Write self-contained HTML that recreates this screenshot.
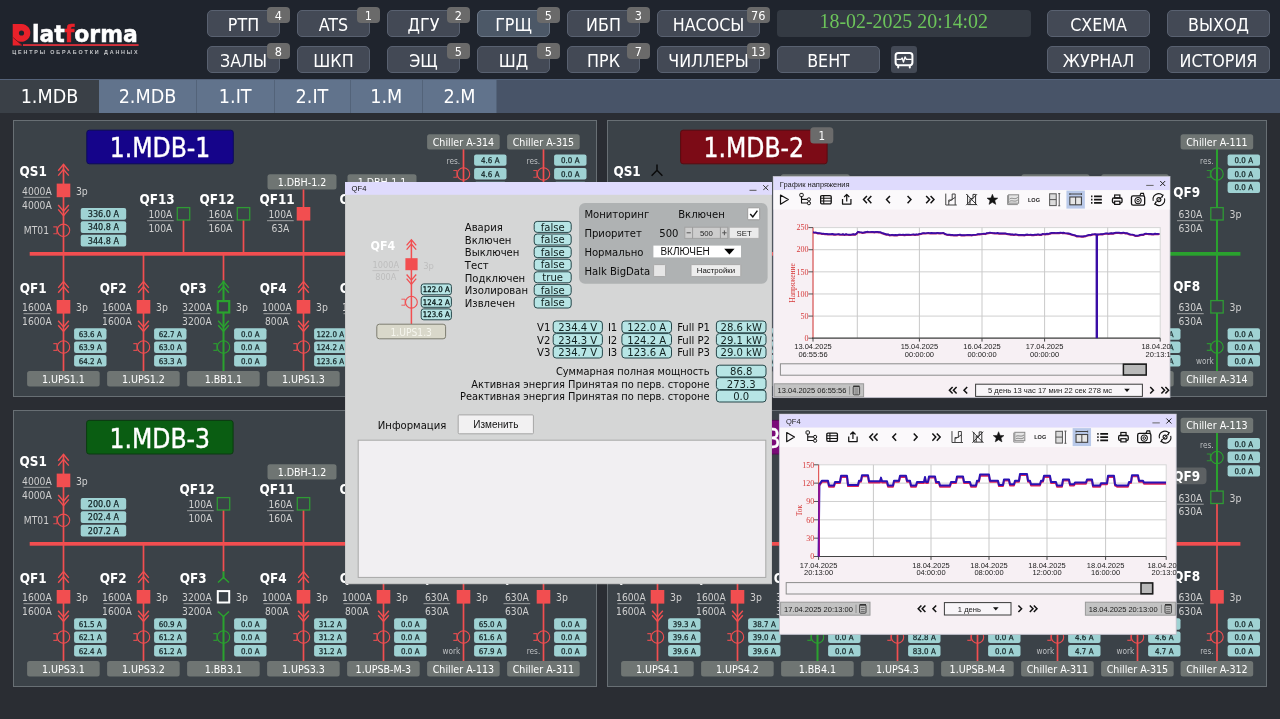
<!DOCTYPE html>
<html lang="ru"><head><meta charset="utf-8"><title>Platforma — 1.MDB</title>
<style>
*{box-sizing:border-box}
html,body{margin:0;padding:0}
body{width:1280px;height:719px;overflow:hidden;background:#2a2d33;font-family:'DejaVu Sans Condensed','Liberation Sans',sans-serif;position:relative}
.hdr{position:absolute;left:0;top:0;width:1280px;height:80px;background:#1f242d}
.btn{position:absolute;height:27px;border-radius:5px;background:#434955;border:1px solid #596170;color:#fff;font-size:17.7px;line-height:27px;padding-top:0.8px;text-align:center;white-space:nowrap}
.btn.act{background:#4c5867;border-color:#6a7686}
.badge{position:absolute;width:22.5px;height:16px;border-radius:4px;background:#6a6a6a;color:#fff;font-size:12.6px;line-height:18.6px;text-align:center}
.clock{position:absolute;left:777px;top:10px;width:253.5px;height:26.5px;border-radius:4px;background:#343a43;color:#6cc45a;font-family:'Liberation Serif',serif;font-size:19.9px;line-height:23.6px;text-align:center}
.icobtn{position:absolute;left:891px;top:46px;width:26px;height:27px;border-radius:3px;background:#434955}
.logo{position:absolute;left:0;top:0;width:150px;height:60px}
.logo svg{overflow:visible}
.tabs{position:absolute;left:0;top:79px;width:1280px;height:34px;background:#485468;border-top:1px solid #55637a}
.tab{position:absolute;top:0;height:33px;background:#61738c;color:#fff;font-size:19.6px;line-height:34px;text-align:center;border-right:1px solid #536379}
.tab.on{background:#3a4047;border-right:none}
svg text{font-family:'DejaVu Sans Condensed','Liberation Sans',sans-serif}
.main{position:absolute;left:0;top:0}
.hdr,.tabs,.main{will-change:transform}
</style></head>
<body>
<div class="hdr"><div class="logo"><svg width="150" height="50" viewBox="0 0 150 50">
<path d="M12.7 23.9H21.6A8.95 8.95 0 1 1 16.6 40.4L22.4 45.5H12.7Z" fill="#e9212a"/>
<path d="M13.2 37.6L22 45.3" stroke="#7d1218" stroke-width="0.9" fill="none"/>
<circle cx="21.5" cy="33" r="2.6" fill="#1f242d"/>
<rect x="23" y="44.1" width="115.6" height="1.9" fill="#d3303a"/>
<text x="32" y="42" style="font-family:'DejaVu Sans','Liberation Sans',sans-serif" font-weight="bold" font-size="23.4" fill="#fff" stroke="#fff" stroke-width="0.5" textLength="105.8" lengthAdjust="spacingAndGlyphs">lat<tspan fill="#e9212a" stroke="#e9212a">f</tspan>orma</text>
<text x="12.2" y="53.8" style="font-family:'Liberation Sans',sans-serif" font-weight="bold" font-size="5.4" fill="#c4c6c9" textLength="126.6" lengthAdjust="spacing" letter-spacing="1.2">ЦЕНТРЫ ОБРАБОТКИ ДАННЫХ</text>
</svg></div>
<div class="btn" style="left:207px;top:10px;width:73px">РТП</div><div class="badge" style="left:267px;top:6.5px">4</div>
<div class="btn" style="left:297px;top:10px;width:73px">ATS</div><div class="badge" style="left:357px;top:6.5px">1</div>
<div class="btn" style="left:387px;top:10px;width:73px">ДГУ</div><div class="badge" style="left:447px;top:6.5px">2</div>
<div class="btn act" style="left:477px;top:10px;width:73px">ГРЩ</div><div class="badge" style="left:537px;top:6.5px">5</div>
<div class="btn" style="left:567px;top:10px;width:73px">ИБП</div><div class="badge" style="left:627px;top:6.5px">3</div>
<div class="btn" style="left:657px;top:10px;width:103px">НАСОСЫ</div><div class="badge" style="left:747px;top:6.5px">76</div>
<div class="btn" style="left:207px;top:46px;width:73px">ЗАЛЫ</div><div class="badge" style="left:267px;top:42.5px">8</div>
<div class="btn" style="left:297px;top:46px;width:73px">ШКП</div>
<div class="btn" style="left:387px;top:46px;width:73px">ЭЩ</div><div class="badge" style="left:447px;top:42.5px">5</div>
<div class="btn" style="left:477px;top:46px;width:73px">ШД</div><div class="badge" style="left:537px;top:42.5px">5</div>
<div class="btn" style="left:567px;top:46px;width:73px">ПРК</div><div class="badge" style="left:627px;top:42.5px">7</div>
<div class="btn" style="left:657px;top:46px;width:103px">ЧИЛЛЕРЫ</div><div class="badge" style="left:747px;top:42.5px">13</div>
<div class="btn" style="left:777px;top:46px;width:103px">ВЕНТ</div>
<div class="btn" style="left:1047px;top:10px;width:103px">СХЕМА</div>
<div class="btn" style="left:1167px;top:10px;width:103px">ВЫХОД</div>
<div class="btn" style="left:1047px;top:46px;width:103px">ЖУРНАЛ</div>
<div class="btn" style="left:1167px;top:46px;width:103px">ИСТОРИЯ</div>
<div class="clock">18-02-2025 20:14:02</div>
<div class="icobtn"><svg width="26" height="27" viewBox="0 0 26 27"><rect x="4.6" y="7" width="16.8" height="12.2" rx="2.6" fill="none" stroke="#fff" stroke-width="2"/><path d="M7.2 20.4v1M18.8 20.4v1" stroke="#fff" stroke-width="2" stroke-linecap="round"/><path d="M5.4 13.4H10l1.2-1.4 1.3 4.2 1.5-5.4 1.3 2.6h5.4" fill="none" stroke="#fff" stroke-width="1.3" stroke-linejoin="round"/></svg></div></div>
<div class="tabs"><div class="tab on" style="left:0px;width:99px">1.MDB</div><div class="tab" style="left:99px;width:98px">2.MDB</div><div class="tab" style="left:197px;width:77.5px">1.IT</div><div class="tab" style="left:274.5px;width:76px">2.IT</div><div class="tab" style="left:350.5px;width:72.5px">1.M</div><div class="tab" style="left:423px;width:74px">2.M</div></div>
<svg class="main" width="1280" height="719" viewBox="0 0 1280 719">
<rect x="13.5" y="120.5" width="583" height="276" fill="#3b4248" stroke="#686f74" stroke-width="1"/>
<rect x="607.5" y="120.5" width="659" height="276" fill="#3b4248" stroke="#686f74" stroke-width="1"/>
<rect x="13.5" y="410.5" width="583" height="276" fill="#3b4248" stroke="#686f74" stroke-width="1"/>
<rect x="607.5" y="410.5" width="659" height="276" fill="#3b4248" stroke="#686f74" stroke-width="1"/>
<g><rect x="86.8" y="130.2" width="146.5" height="33.6" fill="#15048a" rx="2.5" stroke="#0c0a5a" stroke-width="1"/><text x="160" y="157.4" font-size="26.2" fill="#fff" text-anchor="middle" stroke="#fff" stroke-width="0.35">1.MDB-1</text><rect x="29.7" y="252" width="536.8" height="3.7" fill="#f24e50"/><line x1="63.5" y1="164.5" x2="63.5" y2="253" stroke="#f24e50" stroke-width="1.7"/><text x="19.6" y="176.1" font-size="13.4" fill="#fff" text-anchor="start" font-weight="bold">QS1</text><path d="M58.2 170.7L63.5 164.4L68.8 170.7M58.2 175.6L63.5 169.3L68.8 175.6" stroke="#f24e50" stroke-width="1.4" fill="none"/><rect x="56.7" y="183.6" width="13.6" height="13.6" fill="#f24e50"/><text x="36.9" y="194.8" font-size="10.2" fill="#cfcfcf" text-anchor="middle">4000A</text><line x1="23.5" y1="197.3" x2="50.2" y2="197.3" stroke="#a9acae" stroke-width="0.9"/><text x="36.9" y="208.5" font-size="10.2" fill="#cfcfcf" text-anchor="middle">4000A</text><text x="75.9" y="195" font-size="10.4" fill="#cfcfcf" text-anchor="start">3p</text><path d="M58.2 205L63.5 211.2L68.8 205M58.2 209.4L63.5 215.6L68.8 209.4" stroke="#f24e50" stroke-width="1.4" fill="none"/><circle cx="63.5" cy="230.3" r="6.2" fill="none" stroke="#f24e50" stroke-width="1.1"/><path d="M53.3 226.9H56.9V233.7H53.3" stroke="#f24e50" stroke-width="1.1" fill="none" opacity="0.85"/><text x="23.8" y="234.2" font-size="10.2" fill="#cfcfcf" text-anchor="start">MT01</text><rect x="80.7" y="208" width="45.5" height="11.7" fill="#9fd2d3" rx="2"/><text x="103.45" y="217.13" font-size="9" fill="#142426" text-anchor="middle" stroke="#142426" stroke-width="0.25">336.0 A</text><rect x="80.7" y="221.35" width="45.5" height="11.7" fill="#9fd2d3" rx="2"/><text x="103.45" y="230.48" font-size="9" fill="#142426" text-anchor="middle" stroke="#142426" stroke-width="0.25">340.8 A</text><rect x="80.7" y="234.7" width="45.5" height="11.7" fill="#9fd2d3" rx="2"/><text x="103.45" y="243.83" font-size="9" fill="#142426" text-anchor="middle" stroke="#142426" stroke-width="0.25">344.8 A</text><line x1="183.5" y1="220" x2="183.5" y2="253" stroke="#f24e50" stroke-width="1.7"/><text x="139.5" y="203.6" font-size="13.4" fill="#fff" text-anchor="start" font-weight="bold">QF13</text><rect x="177.3" y="207.6" width="12.4" height="12.4" fill="#3b4248" stroke="#2f9a35" stroke-width="1.3"/><text x="160.4" y="218.2" font-size="10.2" fill="#cfcfcf" text-anchor="middle">100A</text><line x1="147" y1="220.7" x2="173.7" y2="220.7" stroke="#a9acae" stroke-width="0.9"/><text x="160.4" y="231.9" font-size="10.2" fill="#cfcfcf" text-anchor="middle">100A</text><line x1="243.5" y1="220" x2="243.5" y2="253" stroke="#f24e50" stroke-width="1.7"/><text x="199.5" y="203.6" font-size="13.4" fill="#fff" text-anchor="start" font-weight="bold">QF12</text><rect x="237.3" y="207.6" width="12.4" height="12.4" fill="#3b4248" stroke="#2f9a35" stroke-width="1.3"/><text x="220.4" y="218.2" font-size="10.2" fill="#cfcfcf" text-anchor="middle">160A</text><line x1="207" y1="220.7" x2="233.7" y2="220.7" stroke="#a9acae" stroke-width="0.9"/><text x="220.4" y="231.9" font-size="10.2" fill="#cfcfcf" text-anchor="middle">160A</text><line x1="303.5" y1="220" x2="303.5" y2="253" stroke="#f24e50" stroke-width="1.7"/><rect x="267.5" y="174.2" width="69" height="15.3" fill="#6f7573" rx="2.5"/><text x="302" y="185.5" font-size="10.6" fill="#fff" text-anchor="middle">1.DBH-1.2</text><line x1="303.5" y1="189.5" x2="303.5" y2="208" stroke="#f24e50" stroke-width="1.7"/><text x="259.5" y="203.6" font-size="13.4" fill="#fff" text-anchor="start" font-weight="bold">QF11</text><rect x="296.7" y="207" width="13.6" height="13.6" fill="#f24e50"/><text x="280.4" y="218.2" font-size="10.2" fill="#cfcfcf" text-anchor="middle">100A</text><line x1="267" y1="220.7" x2="293.7" y2="220.7" stroke="#a9acae" stroke-width="0.9"/><text x="280.4" y="231.9" font-size="10.2" fill="#cfcfcf" text-anchor="middle">63A</text><line x1="383.5" y1="220" x2="383.5" y2="253" stroke="#f24e50" stroke-width="1.7"/><rect x="347.5" y="174.2" width="69" height="15.3" fill="#6f7573" rx="2.5"/><text x="382" y="185.5" font-size="10.6" fill="#fff" text-anchor="middle">1.DBH-1.1</text><line x1="383.5" y1="189.5" x2="383.5" y2="208" stroke="#f24e50" stroke-width="1.7"/><text x="339.5" y="203.6" font-size="13.4" fill="#fff" text-anchor="start" font-weight="bold">QF10</text><rect x="376.7" y="207" width="13.6" height="13.6" fill="#f24e50"/><text x="360.4" y="218.2" font-size="10.2" fill="#cfcfcf" text-anchor="middle">100A</text><line x1="347" y1="220.7" x2="373.7" y2="220.7" stroke="#a9acae" stroke-width="0.9"/><text x="360.4" y="231.9" font-size="10.2" fill="#cfcfcf" text-anchor="middle">63A</text><line x1="463.5" y1="149" x2="463.5" y2="208" stroke="#f24e50" stroke-width="1.7"/><line x1="463.5" y1="220" x2="463.5" y2="253" stroke="#f24e50" stroke-width="1.7"/><rect x="427.1" y="134.2" width="72.6" height="15.3" fill="#6f7573" rx="2.5"/><text x="463.4" y="145.5" font-size="10.6" fill="#fff" text-anchor="middle">Chiller A-314</text><text x="460.1" y="164.3" font-size="8.2" fill="#bcbfc1" text-anchor="end">res.</text><circle cx="463.5" cy="173.9" r="6.2" fill="none" stroke="#f24e50" stroke-width="1.1"/><path d="M453.3 170.5H456.9V177.3H453.3" stroke="#f24e50" stroke-width="1.1" fill="none" opacity="0.85"/><rect x="474.1" y="154.5" width="32.4" height="11.3" fill="#9fd2d3" rx="2"/><text x="490.3" y="163.03" font-size="7.9" fill="#142426" text-anchor="middle" stroke="#142426" stroke-width="0.25">4.6 A</text><rect x="474.1" y="168.1" width="32.4" height="11.3" fill="#9fd2d3" rx="2"/><text x="490.3" y="176.63" font-size="7.9" fill="#142426" text-anchor="middle" stroke="#142426" stroke-width="0.25">4.6 A</text><rect x="474.1" y="181.7" width="32.4" height="11.3" fill="#9fd2d3" rx="2"/><text x="490.3" y="190.23" font-size="7.9" fill="#142426" text-anchor="middle" stroke="#142426" stroke-width="0.25">4.7 A</text><text x="419.7" y="197.4" font-size="13.4" fill="#fff" text-anchor="start" font-weight="bold">QF9</text><rect x="456.7" y="207" width="13.6" height="13.6" fill="#f24e50"/><text x="436.9" y="218.2" font-size="10.2" fill="#cfcfcf" text-anchor="middle">630A</text><line x1="423.5" y1="220.7" x2="450.2" y2="220.7" stroke="#a9acae" stroke-width="0.9"/><text x="436.9" y="231.9" font-size="10.2" fill="#cfcfcf" text-anchor="middle">630A</text><text x="476.1" y="218.4" font-size="10.4" fill="#cfcfcf" text-anchor="start">3p</text><line x1="543.5" y1="149" x2="543.5" y2="208" stroke="#f24e50" stroke-width="1.7"/><line x1="543.5" y1="220" x2="543.5" y2="253" stroke="#f24e50" stroke-width="1.7"/><rect x="507.1" y="134.2" width="72.6" height="15.3" fill="#6f7573" rx="2.5"/><text x="543.4" y="145.5" font-size="10.6" fill="#fff" text-anchor="middle">Chiller A-315</text><text x="540.1" y="164.3" font-size="8.2" fill="#bcbfc1" text-anchor="end">res.</text><circle cx="543.5" cy="173.9" r="6.2" fill="none" stroke="#f24e50" stroke-width="1.1"/><path d="M533.3 170.5H536.9V177.3H533.3" stroke="#f24e50" stroke-width="1.1" fill="none" opacity="0.85"/><rect x="554.1" y="154.5" width="32.4" height="11.3" fill="#9fd2d3" rx="2"/><text x="570.3" y="163.03" font-size="7.9" fill="#142426" text-anchor="middle" stroke="#142426" stroke-width="0.25">0.0 A</text><rect x="554.1" y="168.1" width="32.4" height="11.3" fill="#9fd2d3" rx="2"/><text x="570.3" y="176.63" font-size="7.9" fill="#142426" text-anchor="middle" stroke="#142426" stroke-width="0.25">0.0 A</text><rect x="554.1" y="181.7" width="32.4" height="11.3" fill="#9fd2d3" rx="2"/><text x="570.3" y="190.23" font-size="7.9" fill="#142426" text-anchor="middle" stroke="#142426" stroke-width="0.25">0.0 A</text><text x="499.7" y="197.4" font-size="13.4" fill="#fff" text-anchor="start" font-weight="bold">QF8</text><rect x="536.7" y="207" width="13.6" height="13.6" fill="#f24e50"/><text x="516.9" y="218.2" font-size="10.2" fill="#cfcfcf" text-anchor="middle">630A</text><line x1="503.5" y1="220.7" x2="530.2" y2="220.7" stroke="#a9acae" stroke-width="0.9"/><text x="516.9" y="231.9" font-size="10.2" fill="#cfcfcf" text-anchor="middle">630A</text><text x="556.1" y="218.4" font-size="10.4" fill="#cfcfcf" text-anchor="start">3p</text><line x1="63.5" y1="255" x2="63.5" y2="371" stroke="#f24e50" stroke-width="1.7"/><text x="19.7" y="293" font-size="13.4" fill="#fff" text-anchor="start" font-weight="bold">QF1</text><path d="M58.2 287.9L63.5 281.6L68.8 287.9M58.2 292.8L63.5 286.5L68.8 292.8" stroke="#f24e50" stroke-width="1.4" fill="none"/><path d="M58.2 320.8L63.5 327L68.8 320.8M58.2 325.2L63.5 331.4L68.8 325.2" stroke="#f24e50" stroke-width="1.4" fill="none"/><rect x="56.7" y="300" width="13.6" height="13.6" fill="#f24e50"/><text x="36.9" y="311.2" font-size="10.2" fill="#cfcfcf" text-anchor="middle">1600A</text><line x1="23.5" y1="313.7" x2="50.2" y2="313.7" stroke="#a9acae" stroke-width="0.9"/><text x="36.9" y="324.9" font-size="10.2" fill="#cfcfcf" text-anchor="middle">1600A</text><text x="76.1" y="311.4" font-size="10.4" fill="#cfcfcf" text-anchor="start">3p</text><circle cx="63.5" cy="347" r="6.2" fill="none" stroke="#f24e50" stroke-width="1.1"/><path d="M53.3 343.6H56.9V350.4H53.3" stroke="#f24e50" stroke-width="1.1" fill="none" opacity="0.85"/><rect x="74.1" y="328.2" width="32.4" height="11.5" fill="#9fd2d3" rx="2"/><text x="90.3" y="336.83" font-size="7.9" fill="#142426" text-anchor="middle" stroke="#142426" stroke-width="0.25">63.6 A</text><rect x="74.1" y="341.55" width="32.4" height="11.5" fill="#9fd2d3" rx="2"/><text x="90.3" y="350.18" font-size="7.9" fill="#142426" text-anchor="middle" stroke="#142426" stroke-width="0.25">63.9 A</text><rect x="74.1" y="354.9" width="32.4" height="11.5" fill="#9fd2d3" rx="2"/><text x="90.3" y="363.53" font-size="7.9" fill="#142426" text-anchor="middle" stroke="#142426" stroke-width="0.25">64.2 A</text><rect x="27.1" y="371" width="72.6" height="15.5" fill="#6f7573" rx="2.5"/><text x="63.4" y="382.5" font-size="10.6" fill="#fff" text-anchor="middle">1.UPS1.1</text><line x1="143.5" y1="255" x2="143.5" y2="371" stroke="#f24e50" stroke-width="1.7"/><text x="99.7" y="293" font-size="13.4" fill="#fff" text-anchor="start" font-weight="bold">QF2</text><path d="M138.2 287.9L143.5 281.6L148.8 287.9M138.2 292.8L143.5 286.5L148.8 292.8" stroke="#f24e50" stroke-width="1.4" fill="none"/><path d="M138.2 320.8L143.5 327L148.8 320.8M138.2 325.2L143.5 331.4L148.8 325.2" stroke="#f24e50" stroke-width="1.4" fill="none"/><rect x="136.7" y="300" width="13.6" height="13.6" fill="#f24e50"/><text x="116.9" y="311.2" font-size="10.2" fill="#cfcfcf" text-anchor="middle">1600A</text><line x1="103.5" y1="313.7" x2="130.2" y2="313.7" stroke="#a9acae" stroke-width="0.9"/><text x="116.9" y="324.9" font-size="10.2" fill="#cfcfcf" text-anchor="middle">1600A</text><text x="156.1" y="311.4" font-size="10.4" fill="#cfcfcf" text-anchor="start">3p</text><circle cx="143.5" cy="347" r="6.2" fill="none" stroke="#f24e50" stroke-width="1.1"/><path d="M133.3 343.6H136.9V350.4H133.3" stroke="#f24e50" stroke-width="1.1" fill="none" opacity="0.85"/><rect x="154.1" y="328.2" width="32.4" height="11.5" fill="#9fd2d3" rx="2"/><text x="170.3" y="336.83" font-size="7.9" fill="#142426" text-anchor="middle" stroke="#142426" stroke-width="0.25">62.7 A</text><rect x="154.1" y="341.55" width="32.4" height="11.5" fill="#9fd2d3" rx="2"/><text x="170.3" y="350.18" font-size="7.9" fill="#142426" text-anchor="middle" stroke="#142426" stroke-width="0.25">63.0 A</text><rect x="154.1" y="354.9" width="32.4" height="11.5" fill="#9fd2d3" rx="2"/><text x="170.3" y="363.53" font-size="7.9" fill="#142426" text-anchor="middle" stroke="#142426" stroke-width="0.25">63.3 A</text><rect x="107.1" y="371" width="72.6" height="15.5" fill="#6f7573" rx="2.5"/><text x="143.4" y="382.5" font-size="10.6" fill="#fff" text-anchor="middle">1.UPS1.2</text><line x1="223.5" y1="255" x2="223.5" y2="280.5" stroke="#f24e50" stroke-width="1.7"/><line x1="223.5" y1="280.5" x2="223.5" y2="371" stroke="#2aa22e" stroke-width="2"/><text x="179.7" y="293" font-size="13.4" fill="#fff" text-anchor="start" font-weight="bold">QF3</text><path d="M218.2 287.9L223.5 281.6L228.8 287.9M218.2 292.8L223.5 286.5L228.8 292.8" stroke="#2aa22e" stroke-width="1.4" fill="none"/><path d="M218.2 320.8L223.5 327L228.8 320.8M218.2 325.2L223.5 331.4L228.8 325.2" stroke="#2aa22e" stroke-width="1.4" fill="none"/><rect x="217.8" y="301.1" width="11.4" height="11.4" fill="#3b4248" stroke="#2aa22e" stroke-width="2.2"/><text x="196.9" y="311.2" font-size="10.2" fill="#cfcfcf" text-anchor="middle">3200A</text><line x1="183.5" y1="313.7" x2="210.2" y2="313.7" stroke="#a9acae" stroke-width="0.9"/><text x="196.9" y="324.9" font-size="10.2" fill="#cfcfcf" text-anchor="middle">3200A</text><text x="236.1" y="311.4" font-size="10.4" fill="#cfcfcf" text-anchor="start">3p</text><circle cx="223.5" cy="347" r="6.2" fill="none" stroke="#2aa22e" stroke-width="1.1"/><path d="M213.3 343.6H216.9V350.4H213.3" stroke="#2aa22e" stroke-width="1.1" fill="none" opacity="0.85"/><rect x="234.1" y="328.2" width="32.4" height="11.5" fill="#9fd2d3" rx="2"/><text x="250.3" y="336.83" font-size="7.9" fill="#142426" text-anchor="middle" stroke="#142426" stroke-width="0.25">0.0 A</text><rect x="234.1" y="341.55" width="32.4" height="11.5" fill="#9fd2d3" rx="2"/><text x="250.3" y="350.18" font-size="7.9" fill="#142426" text-anchor="middle" stroke="#142426" stroke-width="0.25">0.0 A</text><rect x="234.1" y="354.9" width="32.4" height="11.5" fill="#9fd2d3" rx="2"/><text x="250.3" y="363.53" font-size="7.9" fill="#142426" text-anchor="middle" stroke="#142426" stroke-width="0.25">0.0 A</text><rect x="187.1" y="371" width="72.6" height="15.5" fill="#6f7573" rx="2.5"/><text x="223.4" y="382.5" font-size="10.6" fill="#fff" text-anchor="middle">1.BB1.1</text><line x1="303.5" y1="255" x2="303.5" y2="371" stroke="#f24e50" stroke-width="1.7"/><text x="259.7" y="293" font-size="13.4" fill="#fff" text-anchor="start" font-weight="bold">QF4</text><path d="M298.2 287.9L303.5 281.6L308.8 287.9M298.2 292.8L303.5 286.5L308.8 292.8" stroke="#f24e50" stroke-width="1.4" fill="none"/><path d="M298.2 320.8L303.5 327L308.8 320.8M298.2 325.2L303.5 331.4L308.8 325.2" stroke="#f24e50" stroke-width="1.4" fill="none"/><rect x="296.7" y="300" width="13.6" height="13.6" fill="#f24e50"/><text x="276.9" y="311.2" font-size="10.2" fill="#cfcfcf" text-anchor="middle">1000A</text><line x1="263.5" y1="313.7" x2="290.2" y2="313.7" stroke="#a9acae" stroke-width="0.9"/><text x="276.9" y="324.9" font-size="10.2" fill="#cfcfcf" text-anchor="middle">800A</text><text x="316.1" y="311.4" font-size="10.4" fill="#cfcfcf" text-anchor="start">3p</text><circle cx="303.5" cy="347" r="6.2" fill="none" stroke="#f24e50" stroke-width="1.1"/><path d="M293.3 343.6H296.9V350.4H293.3" stroke="#f24e50" stroke-width="1.1" fill="none" opacity="0.85"/><rect x="314.1" y="328.2" width="32.4" height="11.5" fill="#9fd2d3" rx="2"/><text x="330.3" y="336.83" font-size="7.9" fill="#142426" text-anchor="middle" stroke="#142426" stroke-width="0.25">122.0 A</text><rect x="314.1" y="341.55" width="32.4" height="11.5" fill="#9fd2d3" rx="2"/><text x="330.3" y="350.18" font-size="7.9" fill="#142426" text-anchor="middle" stroke="#142426" stroke-width="0.25">124.2 A</text><rect x="314.1" y="354.9" width="32.4" height="11.5" fill="#9fd2d3" rx="2"/><text x="330.3" y="363.53" font-size="7.9" fill="#142426" text-anchor="middle" stroke="#142426" stroke-width="0.25">123.6 A</text><rect x="267.1" y="371" width="72.6" height="15.5" fill="#6f7573" rx="2.5"/><text x="303.4" y="382.5" font-size="10.6" fill="#fff" text-anchor="middle">1.UPS1.3</text><line x1="383.5" y1="255" x2="383.5" y2="371" stroke="#f24e50" stroke-width="1.7"/><text x="339.7" y="293" font-size="13.4" fill="#fff" text-anchor="start" font-weight="bold">QF5</text><path d="M378.2 287.9L383.5 281.6L388.8 287.9M378.2 292.8L383.5 286.5L388.8 292.8" stroke="#f24e50" stroke-width="1.4" fill="none"/><path d="M378.2 320.8L383.5 327L388.8 320.8M378.2 325.2L383.5 331.4L388.8 325.2" stroke="#f24e50" stroke-width="1.4" fill="none"/><rect x="376.7" y="300" width="13.6" height="13.6" fill="#f24e50"/><text x="356.9" y="311.2" font-size="10.2" fill="#cfcfcf" text-anchor="middle">1000A</text><line x1="343.5" y1="313.7" x2="370.2" y2="313.7" stroke="#a9acae" stroke-width="0.9"/><text x="356.9" y="324.9" font-size="10.2" fill="#cfcfcf" text-anchor="middle">800A</text><text x="396.1" y="311.4" font-size="10.4" fill="#cfcfcf" text-anchor="start">3p</text><circle cx="383.5" cy="347" r="6.2" fill="none" stroke="#f24e50" stroke-width="1.1"/><path d="M373.3 343.6H376.9V350.4H373.3" stroke="#f24e50" stroke-width="1.1" fill="none" opacity="0.85"/><rect x="394.1" y="328.2" width="32.4" height="11.5" fill="#9fd2d3" rx="2"/><text x="410.3" y="336.83" font-size="7.9" fill="#142426" text-anchor="middle" stroke="#142426" stroke-width="0.25">0.0 A</text><rect x="394.1" y="341.55" width="32.4" height="11.5" fill="#9fd2d3" rx="2"/><text x="410.3" y="350.18" font-size="7.9" fill="#142426" text-anchor="middle" stroke="#142426" stroke-width="0.25">0.0 A</text><rect x="394.1" y="354.9" width="32.4" height="11.5" fill="#9fd2d3" rx="2"/><text x="410.3" y="363.53" font-size="7.9" fill="#142426" text-anchor="middle" stroke="#142426" stroke-width="0.25">0.0 A</text><rect x="347.1" y="371" width="72.6" height="15.5" fill="#6f7573" rx="2.5"/><text x="383.4" y="382.5" font-size="10.6" fill="#fff" text-anchor="middle">1.UPSB-M-1</text><line x1="463.5" y1="255" x2="463.5" y2="371" stroke="#f24e50" stroke-width="1.7"/><text x="419.7" y="293" font-size="13.4" fill="#fff" text-anchor="start" font-weight="bold">QF6</text><rect x="456.7" y="300" width="13.6" height="13.6" fill="#f24e50"/><text x="436.9" y="311.2" font-size="10.2" fill="#cfcfcf" text-anchor="middle">630A</text><line x1="423.5" y1="313.7" x2="450.2" y2="313.7" stroke="#a9acae" stroke-width="0.9"/><text x="436.9" y="324.9" font-size="10.2" fill="#cfcfcf" text-anchor="middle">630A</text><text x="476.1" y="311.4" font-size="10.4" fill="#cfcfcf" text-anchor="start">3p</text><circle cx="463.5" cy="347" r="6.2" fill="none" stroke="#f24e50" stroke-width="1.1"/><path d="M453.3 343.6H456.9V350.4H453.3" stroke="#f24e50" stroke-width="1.1" fill="none" opacity="0.85"/><rect x="474.1" y="328.2" width="32.4" height="11.5" fill="#9fd2d3" rx="2"/><text x="490.3" y="336.83" font-size="7.9" fill="#142426" text-anchor="middle" stroke="#142426" stroke-width="0.25">4.6 A</text><rect x="474.1" y="341.55" width="32.4" height="11.5" fill="#9fd2d3" rx="2"/><text x="490.3" y="350.18" font-size="7.9" fill="#142426" text-anchor="middle" stroke="#142426" stroke-width="0.25">4.6 A</text><rect x="474.1" y="354.9" width="32.4" height="11.5" fill="#9fd2d3" rx="2"/><text x="490.3" y="363.53" font-size="7.9" fill="#142426" text-anchor="middle" stroke="#142426" stroke-width="0.25">4.7 A</text><text x="460.3" y="364" font-size="8.2" fill="#bcbfc1" text-anchor="end">work</text><rect x="427.1" y="371" width="72.6" height="15.5" fill="#6f7573" rx="2.5"/><text x="463.4" y="382.5" font-size="10.6" fill="#fff" text-anchor="middle">Chiller A-111</text><line x1="543.5" y1="255" x2="543.5" y2="371" stroke="#f24e50" stroke-width="1.7"/><text x="499.7" y="293" font-size="13.4" fill="#fff" text-anchor="start" font-weight="bold">QF7</text><rect x="536.7" y="300" width="13.6" height="13.6" fill="#f24e50"/><text x="516.9" y="311.2" font-size="10.2" fill="#cfcfcf" text-anchor="middle">630A</text><line x1="503.5" y1="313.7" x2="530.2" y2="313.7" stroke="#a9acae" stroke-width="0.9"/><text x="516.9" y="324.9" font-size="10.2" fill="#cfcfcf" text-anchor="middle">630A</text><text x="556.1" y="311.4" font-size="10.4" fill="#cfcfcf" text-anchor="start">3p</text><circle cx="543.5" cy="347" r="6.2" fill="none" stroke="#f24e50" stroke-width="1.1"/><path d="M533.3 343.6H536.9V350.4H533.3" stroke="#f24e50" stroke-width="1.1" fill="none" opacity="0.85"/><rect x="554.1" y="328.2" width="32.4" height="11.5" fill="#9fd2d3" rx="2"/><text x="570.3" y="336.83" font-size="7.9" fill="#142426" text-anchor="middle" stroke="#142426" stroke-width="0.25">0.0 A</text><rect x="554.1" y="341.55" width="32.4" height="11.5" fill="#9fd2d3" rx="2"/><text x="570.3" y="350.18" font-size="7.9" fill="#142426" text-anchor="middle" stroke="#142426" stroke-width="0.25">0.0 A</text><rect x="554.1" y="354.9" width="32.4" height="11.5" fill="#9fd2d3" rx="2"/><text x="570.3" y="363.53" font-size="7.9" fill="#142426" text-anchor="middle" stroke="#142426" stroke-width="0.25">0.0 A</text><text x="540.3" y="364" font-size="8.2" fill="#bcbfc1" text-anchor="end">res.</text><rect x="507.1" y="371" width="72.6" height="15.5" fill="#6f7573" rx="2.5"/><text x="543.4" y="382.5" font-size="10.6" fill="#fff" text-anchor="middle">Chiller A-312</text></g>
<g><rect x="86.6" y="420.4" width="146.5" height="33.6" fill="#0a5d12" rx="2.5" stroke="#0b3b10" stroke-width="1"/><text x="159.8" y="447.6" font-size="26.2" fill="#fff" text-anchor="middle" stroke="#fff" stroke-width="0.35">1.MDB-3</text><rect x="29.7" y="542" width="536.8" height="3.7" fill="#f24e50"/><line x1="63.5" y1="454.5" x2="63.5" y2="543" stroke="#f24e50" stroke-width="1.7"/><text x="19.6" y="466.1" font-size="13.4" fill="#fff" text-anchor="start" font-weight="bold">QS1</text><path d="M58.2 460.7L63.5 454.4L68.8 460.7M58.2 465.6L63.5 459.3L68.8 465.6" stroke="#f24e50" stroke-width="1.4" fill="none"/><rect x="56.7" y="473.6" width="13.6" height="13.6" fill="#f24e50"/><text x="36.9" y="484.8" font-size="10.2" fill="#cfcfcf" text-anchor="middle">4000A</text><line x1="23.5" y1="487.3" x2="50.2" y2="487.3" stroke="#a9acae" stroke-width="0.9"/><text x="36.9" y="498.5" font-size="10.2" fill="#cfcfcf" text-anchor="middle">4000A</text><text x="75.9" y="485" font-size="10.4" fill="#cfcfcf" text-anchor="start">3p</text><path d="M58.2 495L63.5 501.2L68.8 495M58.2 499.4L63.5 505.6L68.8 499.4" stroke="#f24e50" stroke-width="1.4" fill="none"/><circle cx="63.5" cy="520.3" r="6.2" fill="none" stroke="#f24e50" stroke-width="1.1"/><path d="M53.3 516.9H56.9V523.7H53.3" stroke="#f24e50" stroke-width="1.1" fill="none" opacity="0.85"/><text x="23.8" y="524.2" font-size="10.2" fill="#cfcfcf" text-anchor="start">MT01</text><rect x="80.7" y="498" width="45.5" height="11.7" fill="#9fd2d3" rx="2"/><text x="103.45" y="507.14" font-size="9" fill="#142426" text-anchor="middle" stroke="#142426" stroke-width="0.25">200.0 A</text><rect x="80.7" y="511.35" width="45.5" height="11.7" fill="#9fd2d3" rx="2"/><text x="103.45" y="520.49" font-size="9" fill="#142426" text-anchor="middle" stroke="#142426" stroke-width="0.25">202.4 A</text><rect x="80.7" y="524.7" width="45.5" height="11.7" fill="#9fd2d3" rx="2"/><text x="103.45" y="533.84" font-size="9" fill="#142426" text-anchor="middle" stroke="#142426" stroke-width="0.25">207.2 A</text><line x1="223.5" y1="510" x2="223.5" y2="543" stroke="#f24e50" stroke-width="1.7"/><text x="179.5" y="493.6" font-size="13.4" fill="#fff" text-anchor="start" font-weight="bold">QF12</text><rect x="217.3" y="497.6" width="12.4" height="12.4" fill="#3b4248" stroke="#2f9a35" stroke-width="1.3"/><text x="200.4" y="508.2" font-size="10.2" fill="#cfcfcf" text-anchor="middle">100A</text><line x1="187" y1="510.7" x2="213.7" y2="510.7" stroke="#a9acae" stroke-width="0.9"/><text x="200.4" y="521.9" font-size="10.2" fill="#cfcfcf" text-anchor="middle">100A</text><line x1="303.5" y1="510" x2="303.5" y2="543" stroke="#f24e50" stroke-width="1.7"/><rect x="267.5" y="464.2" width="69" height="15.3" fill="#6f7573" rx="2.5"/><text x="302" y="475.5" font-size="10.6" fill="#fff" text-anchor="middle">1.DBH-1.2</text><text x="259.5" y="493.6" font-size="13.4" fill="#fff" text-anchor="start" font-weight="bold">QF11</text><rect x="297.3" y="497.6" width="12.4" height="12.4" fill="#3b4248" stroke="#2f9a35" stroke-width="1.3"/><text x="280.4" y="508.2" font-size="10.2" fill="#cfcfcf" text-anchor="middle">160A</text><line x1="267" y1="510.7" x2="293.7" y2="510.7" stroke="#a9acae" stroke-width="0.9"/><text x="280.4" y="521.9" font-size="10.2" fill="#cfcfcf" text-anchor="middle">160A</text><line x1="383.5" y1="510" x2="383.5" y2="543" stroke="#f24e50" stroke-width="1.7"/><rect x="347.5" y="464.2" width="69" height="15.3" fill="#6f7573" rx="2.5"/><text x="382" y="475.5" font-size="10.6" fill="#fff" text-anchor="middle">1.DBH-1.1</text><line x1="383.5" y1="479.5" x2="383.5" y2="498" stroke="#f24e50" stroke-width="1.7"/><text x="339.5" y="493.6" font-size="13.4" fill="#fff" text-anchor="start" font-weight="bold">QF10</text><rect x="376.7" y="497" width="13.6" height="13.6" fill="#f24e50"/><text x="360.4" y="508.2" font-size="10.2" fill="#cfcfcf" text-anchor="middle">100A</text><line x1="347" y1="510.7" x2="373.7" y2="510.7" stroke="#a9acae" stroke-width="0.9"/><text x="360.4" y="521.9" font-size="10.2" fill="#cfcfcf" text-anchor="middle">63A</text><line x1="463.5" y1="439" x2="463.5" y2="498" stroke="#f24e50" stroke-width="1.7"/><line x1="463.5" y1="510" x2="463.5" y2="543" stroke="#f24e50" stroke-width="1.7"/><rect x="427.1" y="424.2" width="72.6" height="15.3" fill="#6f7573" rx="2.5"/><text x="463.4" y="435.5" font-size="10.6" fill="#fff" text-anchor="middle">Chiller A-112</text><text x="460.1" y="454.3" font-size="8.2" fill="#bcbfc1" text-anchor="end">res.</text><circle cx="463.5" cy="463.9" r="6.2" fill="none" stroke="#f24e50" stroke-width="1.1"/><path d="M453.3 460.5H456.9V467.3H453.3" stroke="#f24e50" stroke-width="1.1" fill="none" opacity="0.85"/><rect x="474.1" y="444.5" width="32.4" height="11.3" fill="#9fd2d3" rx="2"/><text x="490.3" y="453.03" font-size="7.9" fill="#142426" text-anchor="middle" stroke="#142426" stroke-width="0.25">0.0 A</text><rect x="474.1" y="458.1" width="32.4" height="11.3" fill="#9fd2d3" rx="2"/><text x="490.3" y="466.63" font-size="7.9" fill="#142426" text-anchor="middle" stroke="#142426" stroke-width="0.25">0.0 A</text><rect x="474.1" y="471.7" width="32.4" height="11.3" fill="#9fd2d3" rx="2"/><text x="490.3" y="480.23" font-size="7.9" fill="#142426" text-anchor="middle" stroke="#142426" stroke-width="0.25">0.0 A</text><text x="419.7" y="487.4" font-size="13.4" fill="#fff" text-anchor="start" font-weight="bold">QF9</text><rect x="456.7" y="497" width="13.6" height="13.6" fill="#f24e50"/><text x="436.9" y="508.2" font-size="10.2" fill="#cfcfcf" text-anchor="middle">630A</text><line x1="423.5" y1="510.7" x2="450.2" y2="510.7" stroke="#a9acae" stroke-width="0.9"/><text x="436.9" y="521.9" font-size="10.2" fill="#cfcfcf" text-anchor="middle">630A</text><text x="476.1" y="508.4" font-size="10.4" fill="#cfcfcf" text-anchor="start">3p</text><line x1="543.5" y1="439" x2="543.5" y2="498" stroke="#f24e50" stroke-width="1.7"/><line x1="543.5" y1="510" x2="543.5" y2="543" stroke="#f24e50" stroke-width="1.7"/><rect x="507.1" y="424.2" width="72.6" height="15.3" fill="#6f7573" rx="2.5"/><text x="543.4" y="435.5" font-size="10.6" fill="#fff" text-anchor="middle">Chiller A-313</text><text x="540.1" y="454.3" font-size="8.2" fill="#bcbfc1" text-anchor="end">res.</text><circle cx="543.5" cy="463.9" r="6.2" fill="none" stroke="#f24e50" stroke-width="1.1"/><path d="M533.3 460.5H536.9V467.3H533.3" stroke="#f24e50" stroke-width="1.1" fill="none" opacity="0.85"/><rect x="554.1" y="444.5" width="32.4" height="11.3" fill="#9fd2d3" rx="2"/><text x="570.3" y="453.03" font-size="7.9" fill="#142426" text-anchor="middle" stroke="#142426" stroke-width="0.25">0.0 A</text><rect x="554.1" y="458.1" width="32.4" height="11.3" fill="#9fd2d3" rx="2"/><text x="570.3" y="466.63" font-size="7.9" fill="#142426" text-anchor="middle" stroke="#142426" stroke-width="0.25">0.0 A</text><rect x="554.1" y="471.7" width="32.4" height="11.3" fill="#9fd2d3" rx="2"/><text x="570.3" y="480.23" font-size="7.9" fill="#142426" text-anchor="middle" stroke="#142426" stroke-width="0.25">0.0 A</text><text x="499.7" y="487.4" font-size="13.4" fill="#fff" text-anchor="start" font-weight="bold">QF8</text><rect x="536.7" y="497" width="13.6" height="13.6" fill="#f24e50"/><text x="516.9" y="508.2" font-size="10.2" fill="#cfcfcf" text-anchor="middle">630A</text><line x1="503.5" y1="510.7" x2="530.2" y2="510.7" stroke="#a9acae" stroke-width="0.9"/><text x="516.9" y="521.9" font-size="10.2" fill="#cfcfcf" text-anchor="middle">630A</text><text x="556.1" y="508.4" font-size="10.4" fill="#cfcfcf" text-anchor="start">3p</text><line x1="63.5" y1="545" x2="63.5" y2="661" stroke="#f24e50" stroke-width="1.7"/><text x="19.7" y="583" font-size="13.4" fill="#fff" text-anchor="start" font-weight="bold">QF1</text><path d="M58.2 577.9L63.5 571.6L68.8 577.9M58.2 582.8L63.5 576.5L68.8 582.8" stroke="#f24e50" stroke-width="1.4" fill="none"/><path d="M58.2 610.8L63.5 617L68.8 610.8M58.2 615.2L63.5 621.4L68.8 615.2" stroke="#f24e50" stroke-width="1.4" fill="none"/><rect x="56.7" y="590" width="13.6" height="13.6" fill="#f24e50"/><text x="36.9" y="601.2" font-size="10.2" fill="#cfcfcf" text-anchor="middle">1600A</text><line x1="23.5" y1="603.7" x2="50.2" y2="603.7" stroke="#a9acae" stroke-width="0.9"/><text x="36.9" y="614.9" font-size="10.2" fill="#cfcfcf" text-anchor="middle">1600A</text><text x="76.1" y="601.4" font-size="10.4" fill="#cfcfcf" text-anchor="start">3p</text><circle cx="63.5" cy="637" r="6.2" fill="none" stroke="#f24e50" stroke-width="1.1"/><path d="M53.3 633.6H56.9V640.4H53.3" stroke="#f24e50" stroke-width="1.1" fill="none" opacity="0.85"/><rect x="74.1" y="618.2" width="32.4" height="11.5" fill="#9fd2d3" rx="2"/><text x="90.3" y="626.83" font-size="7.9" fill="#142426" text-anchor="middle" stroke="#142426" stroke-width="0.25">61.5 A</text><rect x="74.1" y="631.55" width="32.4" height="11.5" fill="#9fd2d3" rx="2"/><text x="90.3" y="640.18" font-size="7.9" fill="#142426" text-anchor="middle" stroke="#142426" stroke-width="0.25">62.1 A</text><rect x="74.1" y="644.9" width="32.4" height="11.5" fill="#9fd2d3" rx="2"/><text x="90.3" y="653.53" font-size="7.9" fill="#142426" text-anchor="middle" stroke="#142426" stroke-width="0.25">62.4 A</text><rect x="27.1" y="661" width="72.6" height="15.5" fill="#6f7573" rx="2.5"/><text x="63.4" y="672.5" font-size="10.6" fill="#fff" text-anchor="middle">1.UPS3.1</text><line x1="143.5" y1="545" x2="143.5" y2="661" stroke="#f24e50" stroke-width="1.7"/><text x="99.7" y="583" font-size="13.4" fill="#fff" text-anchor="start" font-weight="bold">QF2</text><path d="M138.2 577.9L143.5 571.6L148.8 577.9M138.2 582.8L143.5 576.5L148.8 582.8" stroke="#f24e50" stroke-width="1.4" fill="none"/><path d="M138.2 610.8L143.5 617L148.8 610.8M138.2 615.2L143.5 621.4L148.8 615.2" stroke="#f24e50" stroke-width="1.4" fill="none"/><rect x="136.7" y="590" width="13.6" height="13.6" fill="#f24e50"/><text x="116.9" y="601.2" font-size="10.2" fill="#cfcfcf" text-anchor="middle">1600A</text><line x1="103.5" y1="603.7" x2="130.2" y2="603.7" stroke="#a9acae" stroke-width="0.9"/><text x="116.9" y="614.9" font-size="10.2" fill="#cfcfcf" text-anchor="middle">1600A</text><text x="156.1" y="601.4" font-size="10.4" fill="#cfcfcf" text-anchor="start">3p</text><circle cx="143.5" cy="637" r="6.2" fill="none" stroke="#f24e50" stroke-width="1.1"/><path d="M133.3 633.6H136.9V640.4H133.3" stroke="#f24e50" stroke-width="1.1" fill="none" opacity="0.85"/><rect x="154.1" y="618.2" width="32.4" height="11.5" fill="#9fd2d3" rx="2"/><text x="170.3" y="626.83" font-size="7.9" fill="#142426" text-anchor="middle" stroke="#142426" stroke-width="0.25">60.9 A</text><rect x="154.1" y="631.55" width="32.4" height="11.5" fill="#9fd2d3" rx="2"/><text x="170.3" y="640.18" font-size="7.9" fill="#142426" text-anchor="middle" stroke="#142426" stroke-width="0.25">61.2 A</text><rect x="154.1" y="644.9" width="32.4" height="11.5" fill="#9fd2d3" rx="2"/><text x="170.3" y="653.53" font-size="7.9" fill="#142426" text-anchor="middle" stroke="#142426" stroke-width="0.25">61.2 A</text><rect x="107.1" y="661" width="72.6" height="15.5" fill="#6f7573" rx="2.5"/><text x="143.4" y="672.5" font-size="10.6" fill="#fff" text-anchor="middle">1.UPS3.2</text><line x1="223.5" y1="545" x2="223.5" y2="571.5" stroke="#f24e50" stroke-width="1.7"/><line x1="223.5" y1="571.5" x2="223.5" y2="578.5" stroke="#2aa22e" stroke-width="2"/><path d="M218 582.5L223.5 577.5L229 582.5" stroke="#2aa22e" stroke-width="1.4" fill="none"/><path d="M218 611.5L223.5 616.5L229 611.5" stroke="#2aa22e" stroke-width="1.4" fill="none"/><line x1="223.5" y1="616" x2="223.5" y2="661" stroke="#2aa22e" stroke-width="2"/><text x="179.7" y="583" font-size="13.4" fill="#fff" text-anchor="start" font-weight="bold">QF3</text><rect x="217.8" y="591.1" width="11.4" height="11.4" fill="#3b4248" stroke="#fff" stroke-width="2"/><text x="196.9" y="601.2" font-size="10.2" fill="#cfcfcf" text-anchor="middle">3200A</text><line x1="183.5" y1="603.7" x2="210.2" y2="603.7" stroke="#a9acae" stroke-width="0.9"/><text x="196.9" y="614.9" font-size="10.2" fill="#cfcfcf" text-anchor="middle">3200A</text><text x="236.1" y="601.4" font-size="10.4" fill="#cfcfcf" text-anchor="start">3p</text><circle cx="223.5" cy="637" r="6.2" fill="none" stroke="#2aa22e" stroke-width="1.1"/><path d="M213.3 633.6H216.9V640.4H213.3" stroke="#2aa22e" stroke-width="1.1" fill="none" opacity="0.85"/><rect x="234.1" y="618.2" width="32.4" height="11.5" fill="#9fd2d3" rx="2"/><text x="250.3" y="626.83" font-size="7.9" fill="#142426" text-anchor="middle" stroke="#142426" stroke-width="0.25">0.0 A</text><rect x="234.1" y="631.55" width="32.4" height="11.5" fill="#9fd2d3" rx="2"/><text x="250.3" y="640.18" font-size="7.9" fill="#142426" text-anchor="middle" stroke="#142426" stroke-width="0.25">0.0 A</text><rect x="234.1" y="644.9" width="32.4" height="11.5" fill="#9fd2d3" rx="2"/><text x="250.3" y="653.53" font-size="7.9" fill="#142426" text-anchor="middle" stroke="#142426" stroke-width="0.25">0.0 A</text><rect x="187.1" y="661" width="72.6" height="15.5" fill="#6f7573" rx="2.5"/><text x="223.4" y="672.5" font-size="10.6" fill="#fff" text-anchor="middle">1.BB3.1</text><line x1="303.5" y1="545" x2="303.5" y2="661" stroke="#f24e50" stroke-width="1.7"/><text x="259.7" y="583" font-size="13.4" fill="#fff" text-anchor="start" font-weight="bold">QF4</text><path d="M298.2 577.9L303.5 571.6L308.8 577.9M298.2 582.8L303.5 576.5L308.8 582.8" stroke="#f24e50" stroke-width="1.4" fill="none"/><path d="M298.2 610.8L303.5 617L308.8 610.8M298.2 615.2L303.5 621.4L308.8 615.2" stroke="#f24e50" stroke-width="1.4" fill="none"/><rect x="296.7" y="590" width="13.6" height="13.6" fill="#f24e50"/><text x="276.9" y="601.2" font-size="10.2" fill="#cfcfcf" text-anchor="middle">1000A</text><line x1="263.5" y1="603.7" x2="290.2" y2="603.7" stroke="#a9acae" stroke-width="0.9"/><text x="276.9" y="614.9" font-size="10.2" fill="#cfcfcf" text-anchor="middle">800A</text><text x="316.1" y="601.4" font-size="10.4" fill="#cfcfcf" text-anchor="start">3p</text><circle cx="303.5" cy="637" r="6.2" fill="none" stroke="#f24e50" stroke-width="1.1"/><path d="M293.3 633.6H296.9V640.4H293.3" stroke="#f24e50" stroke-width="1.1" fill="none" opacity="0.85"/><rect x="314.1" y="618.2" width="32.4" height="11.5" fill="#9fd2d3" rx="2"/><text x="330.3" y="626.83" font-size="7.9" fill="#142426" text-anchor="middle" stroke="#142426" stroke-width="0.25">31.2 A</text><rect x="314.1" y="631.55" width="32.4" height="11.5" fill="#9fd2d3" rx="2"/><text x="330.3" y="640.18" font-size="7.9" fill="#142426" text-anchor="middle" stroke="#142426" stroke-width="0.25">31.2 A</text><rect x="314.1" y="644.9" width="32.4" height="11.5" fill="#9fd2d3" rx="2"/><text x="330.3" y="653.53" font-size="7.9" fill="#142426" text-anchor="middle" stroke="#142426" stroke-width="0.25">31.2 A</text><rect x="267.1" y="661" width="72.6" height="15.5" fill="#6f7573" rx="2.5"/><text x="303.4" y="672.5" font-size="10.6" fill="#fff" text-anchor="middle">1.UPS3.3</text><line x1="383.5" y1="545" x2="383.5" y2="661" stroke="#f24e50" stroke-width="1.7"/><text x="339.7" y="583" font-size="13.4" fill="#fff" text-anchor="start" font-weight="bold">QF5</text><path d="M378.2 577.9L383.5 571.6L388.8 577.9M378.2 582.8L383.5 576.5L388.8 582.8" stroke="#f24e50" stroke-width="1.4" fill="none"/><path d="M378.2 610.8L383.5 617L388.8 610.8M378.2 615.2L383.5 621.4L388.8 615.2" stroke="#f24e50" stroke-width="1.4" fill="none"/><rect x="376.7" y="590" width="13.6" height="13.6" fill="#f24e50"/><text x="356.9" y="601.2" font-size="10.2" fill="#cfcfcf" text-anchor="middle">1000A</text><line x1="343.5" y1="603.7" x2="370.2" y2="603.7" stroke="#a9acae" stroke-width="0.9"/><text x="356.9" y="614.9" font-size="10.2" fill="#cfcfcf" text-anchor="middle">800A</text><text x="396.1" y="601.4" font-size="10.4" fill="#cfcfcf" text-anchor="start">3p</text><circle cx="383.5" cy="637" r="6.2" fill="none" stroke="#f24e50" stroke-width="1.1"/><path d="M373.3 633.6H376.9V640.4H373.3" stroke="#f24e50" stroke-width="1.1" fill="none" opacity="0.85"/><rect x="394.1" y="618.2" width="32.4" height="11.5" fill="#9fd2d3" rx="2"/><text x="410.3" y="626.83" font-size="7.9" fill="#142426" text-anchor="middle" stroke="#142426" stroke-width="0.25">0.0 A</text><rect x="394.1" y="631.55" width="32.4" height="11.5" fill="#9fd2d3" rx="2"/><text x="410.3" y="640.18" font-size="7.9" fill="#142426" text-anchor="middle" stroke="#142426" stroke-width="0.25">0.0 A</text><rect x="394.1" y="644.9" width="32.4" height="11.5" fill="#9fd2d3" rx="2"/><text x="410.3" y="653.53" font-size="7.9" fill="#142426" text-anchor="middle" stroke="#142426" stroke-width="0.25">0.0 A</text><rect x="347.1" y="661" width="72.6" height="15.5" fill="#6f7573" rx="2.5"/><text x="383.4" y="672.5" font-size="10.6" fill="#fff" text-anchor="middle">1.UPSB-M-3</text><line x1="463.5" y1="545" x2="463.5" y2="661" stroke="#f24e50" stroke-width="1.7"/><text x="419.7" y="583" font-size="13.4" fill="#fff" text-anchor="start" font-weight="bold">QF6</text><rect x="456.7" y="590" width="13.6" height="13.6" fill="#f24e50"/><text x="436.9" y="601.2" font-size="10.2" fill="#cfcfcf" text-anchor="middle">630A</text><line x1="423.5" y1="603.7" x2="450.2" y2="603.7" stroke="#a9acae" stroke-width="0.9"/><text x="436.9" y="614.9" font-size="10.2" fill="#cfcfcf" text-anchor="middle">630A</text><text x="476.1" y="601.4" font-size="10.4" fill="#cfcfcf" text-anchor="start">3p</text><circle cx="463.5" cy="637" r="6.2" fill="none" stroke="#f24e50" stroke-width="1.1"/><path d="M453.3 633.6H456.9V640.4H453.3" stroke="#f24e50" stroke-width="1.1" fill="none" opacity="0.85"/><rect x="474.1" y="618.2" width="32.4" height="11.5" fill="#9fd2d3" rx="2"/><text x="490.3" y="626.83" font-size="7.9" fill="#142426" text-anchor="middle" stroke="#142426" stroke-width="0.25">65.0 A</text><rect x="474.1" y="631.55" width="32.4" height="11.5" fill="#9fd2d3" rx="2"/><text x="490.3" y="640.18" font-size="7.9" fill="#142426" text-anchor="middle" stroke="#142426" stroke-width="0.25">61.6 A</text><rect x="474.1" y="644.9" width="32.4" height="11.5" fill="#9fd2d3" rx="2"/><text x="490.3" y="653.53" font-size="7.9" fill="#142426" text-anchor="middle" stroke="#142426" stroke-width="0.25">67.9 A</text><text x="460.3" y="654" font-size="8.2" fill="#bcbfc1" text-anchor="end">work</text><rect x="427.1" y="661" width="72.6" height="15.5" fill="#6f7573" rx="2.5"/><text x="463.4" y="672.5" font-size="10.6" fill="#fff" text-anchor="middle">Chiller A-113</text><line x1="543.5" y1="545" x2="543.5" y2="661" stroke="#f24e50" stroke-width="1.7"/><text x="499.7" y="583" font-size="13.4" fill="#fff" text-anchor="start" font-weight="bold">QF7</text><rect x="536.7" y="590" width="13.6" height="13.6" fill="#f24e50"/><text x="516.9" y="601.2" font-size="10.2" fill="#cfcfcf" text-anchor="middle">630A</text><line x1="503.5" y1="603.7" x2="530.2" y2="603.7" stroke="#a9acae" stroke-width="0.9"/><text x="516.9" y="614.9" font-size="10.2" fill="#cfcfcf" text-anchor="middle">630A</text><text x="556.1" y="601.4" font-size="10.4" fill="#cfcfcf" text-anchor="start">3p</text><circle cx="543.5" cy="637" r="6.2" fill="none" stroke="#f24e50" stroke-width="1.1"/><path d="M533.3 633.6H536.9V640.4H533.3" stroke="#f24e50" stroke-width="1.1" fill="none" opacity="0.85"/><rect x="554.1" y="618.2" width="32.4" height="11.5" fill="#9fd2d3" rx="2"/><text x="570.3" y="626.83" font-size="7.9" fill="#142426" text-anchor="middle" stroke="#142426" stroke-width="0.25">0.0 A</text><rect x="554.1" y="631.55" width="32.4" height="11.5" fill="#9fd2d3" rx="2"/><text x="570.3" y="640.18" font-size="7.9" fill="#142426" text-anchor="middle" stroke="#142426" stroke-width="0.25">0.0 A</text><rect x="554.1" y="644.9" width="32.4" height="11.5" fill="#9fd2d3" rx="2"/><text x="570.3" y="653.53" font-size="7.9" fill="#142426" text-anchor="middle" stroke="#142426" stroke-width="0.25">0.0 A</text><text x="540.3" y="654" font-size="8.2" fill="#bcbfc1" text-anchor="end">res.</text><rect x="507.1" y="661" width="72.6" height="15.5" fill="#6f7573" rx="2.5"/><text x="543.4" y="672.5" font-size="10.6" fill="#fff" text-anchor="middle">Chiller A-311</text></g>
<g><rect x="680.6" y="130.2" width="146.5" height="33.6" fill="#7c0b16" rx="2.5" stroke="#5a0a10" stroke-width="1"/><text x="753.8" y="157.4" font-size="26.2" fill="#fff" text-anchor="middle" stroke="#fff" stroke-width="0.35">1.MDB-2</text><rect x="810.3" y="127.3" width="23" height="16.2" fill="#6b6b6b" rx="3.5"/><text x="821.8" y="139.9" font-size="11.5" fill="#fff" text-anchor="middle">1</text><text x="613.4" y="176.1" font-size="13.4" fill="#fff" text-anchor="start" font-weight="bold">QS1</text><path d="M657 164.6V170.3M651.6 175.8L657 170.3L662.4 175.8" stroke="#0a0a0a" stroke-width="1.5" fill="none"/><rect x="780.8" y="174.2" width="69" height="15.3" fill="#6f7573" rx="2.5"/><rect x="1021.4" y="174.2" width="68.2" height="15.3" fill="#6f7573" rx="2.5"/><rect x="1101.2" y="174.2" width="67.6" height="15.3" fill="#6f7573" rx="2.5"/><rect x="623.7" y="252" width="491.3" height="3.7" fill="#f24e50"/><rect x="1115" y="252" width="125.4" height="3.7" fill="#2aa22e"/><line x1="657.5" y1="255" x2="657.5" y2="371" stroke="#f24e50" stroke-width="1.7"/><text x="613.7" y="293" font-size="13.4" fill="#fff" text-anchor="start" font-weight="bold">QF1</text><path d="M652.2 287.9L657.5 281.6L662.8 287.9M652.2 292.8L657.5 286.5L662.8 292.8" stroke="#f24e50" stroke-width="1.4" fill="none"/><path d="M652.2 320.8L657.5 327L662.8 320.8M652.2 325.2L657.5 331.4L662.8 325.2" stroke="#f24e50" stroke-width="1.4" fill="none"/><rect x="650.7" y="300" width="13.6" height="13.6" fill="#f24e50"/><text x="630.9" y="311.2" font-size="10.2" fill="#cfcfcf" text-anchor="middle">1600A</text><line x1="617.5" y1="313.7" x2="644.2" y2="313.7" stroke="#a9acae" stroke-width="0.9"/><text x="630.9" y="324.9" font-size="10.2" fill="#cfcfcf" text-anchor="middle">1600A</text><text x="670.1" y="311.4" font-size="10.4" fill="#cfcfcf" text-anchor="start">3p</text><circle cx="657.5" cy="347" r="6.2" fill="none" stroke="#f24e50" stroke-width="1.1"/><path d="M647.3 343.6H650.9V350.4H647.3" stroke="#f24e50" stroke-width="1.1" fill="none" opacity="0.85"/><rect x="668.1" y="328.2" width="32.4" height="11.5" fill="#9fd2d3" rx="2"/><text x="684.3" y="336.83" font-size="7.9" fill="#142426" text-anchor="middle" stroke="#142426" stroke-width="0.25">0.0 A</text><rect x="668.1" y="341.55" width="32.4" height="11.5" fill="#9fd2d3" rx="2"/><text x="684.3" y="350.18" font-size="7.9" fill="#142426" text-anchor="middle" stroke="#142426" stroke-width="0.25">0.0 A</text><rect x="668.1" y="354.9" width="32.4" height="11.5" fill="#9fd2d3" rx="2"/><text x="684.3" y="363.53" font-size="7.9" fill="#142426" text-anchor="middle" stroke="#142426" stroke-width="0.25">0.0 A</text><rect x="621.1" y="371" width="72.6" height="15.5" fill="#6f7573" rx="2.5"/><text x="657.4" y="382.5" font-size="10.6" fill="#fff" text-anchor="middle">1.UPS2.1</text><line x1="737.5" y1="255" x2="737.5" y2="371" stroke="#f24e50" stroke-width="1.7"/><text x="693.7" y="293" font-size="13.4" fill="#fff" text-anchor="start" font-weight="bold">QF2</text><path d="M732.2 287.9L737.5 281.6L742.8 287.9M732.2 292.8L737.5 286.5L742.8 292.8" stroke="#f24e50" stroke-width="1.4" fill="none"/><path d="M732.2 320.8L737.5 327L742.8 320.8M732.2 325.2L737.5 331.4L742.8 325.2" stroke="#f24e50" stroke-width="1.4" fill="none"/><rect x="730.7" y="300" width="13.6" height="13.6" fill="#f24e50"/><text x="710.9" y="311.2" font-size="10.2" fill="#cfcfcf" text-anchor="middle">1600A</text><line x1="697.5" y1="313.7" x2="724.2" y2="313.7" stroke="#a9acae" stroke-width="0.9"/><text x="710.9" y="324.9" font-size="10.2" fill="#cfcfcf" text-anchor="middle">1600A</text><text x="750.1" y="311.4" font-size="10.4" fill="#cfcfcf" text-anchor="start">3p</text><circle cx="737.5" cy="347" r="6.2" fill="none" stroke="#f24e50" stroke-width="1.1"/><path d="M727.3 343.6H730.9V350.4H727.3" stroke="#f24e50" stroke-width="1.1" fill="none" opacity="0.85"/><rect x="748.1" y="328.2" width="32.4" height="11.5" fill="#9fd2d3" rx="2"/><text x="764.3" y="336.83" font-size="7.9" fill="#142426" text-anchor="middle" stroke="#142426" stroke-width="0.25">0.0 A</text><rect x="748.1" y="341.55" width="32.4" height="11.5" fill="#9fd2d3" rx="2"/><text x="764.3" y="350.18" font-size="7.9" fill="#142426" text-anchor="middle" stroke="#142426" stroke-width="0.25">0.0 A</text><rect x="748.1" y="354.9" width="32.4" height="11.5" fill="#9fd2d3" rx="2"/><text x="764.3" y="363.53" font-size="7.9" fill="#142426" text-anchor="middle" stroke="#142426" stroke-width="0.25">0.0 A</text><rect x="701.1" y="371" width="72.6" height="15.5" fill="#6f7573" rx="2.5"/><text x="737.4" y="382.5" font-size="10.6" fill="#fff" text-anchor="middle">1.UPS2.2</text><line x1="1137.5" y1="255" x2="1137.5" y2="371" stroke="#2aa22e" stroke-width="2"/><text x="1093.7" y="293" font-size="13.4" fill="#fff" text-anchor="start" font-weight="bold">QF7</text><rect x="1131.3" y="300.6" width="12.4" height="12.4" fill="#3b4248" stroke="#2f9a35" stroke-width="1.3"/><text x="1110.9" y="311.2" font-size="10.2" fill="#cfcfcf" text-anchor="middle">630A</text><line x1="1097.5" y1="313.7" x2="1124.2" y2="313.7" stroke="#a9acae" stroke-width="0.9"/><text x="1110.9" y="324.9" font-size="10.2" fill="#cfcfcf" text-anchor="middle">630A</text><text x="1150.1" y="311.4" font-size="10.4" fill="#cfcfcf" text-anchor="start">3p</text><circle cx="1137.5" cy="347" r="6.2" fill="none" stroke="#2aa22e" stroke-width="1.1"/><path d="M1127.3 343.6H1130.9V350.4H1127.3" stroke="#2aa22e" stroke-width="1.1" fill="none" opacity="0.85"/><rect x="1148.1" y="328.2" width="32.4" height="11.5" fill="#9fd2d3" rx="2"/><text x="1164.3" y="336.83" font-size="7.9" fill="#142426" text-anchor="middle" stroke="#142426" stroke-width="0.25">0.0 A</text><rect x="1148.1" y="341.55" width="32.4" height="11.5" fill="#9fd2d3" rx="2"/><text x="1164.3" y="350.18" font-size="7.9" fill="#142426" text-anchor="middle" stroke="#142426" stroke-width="0.25">0.0 A</text><rect x="1148.1" y="354.9" width="32.4" height="11.5" fill="#9fd2d3" rx="2"/><text x="1164.3" y="363.53" font-size="7.9" fill="#142426" text-anchor="middle" stroke="#142426" stroke-width="0.25">0.0 A</text><text x="1134.3" y="364" font-size="8.2" fill="#bcbfc1" text-anchor="end">res.</text><rect x="1101.1" y="371" width="72.6" height="15.5" fill="#6f7573" rx="2.5"/><text x="1137.4" y="382.5" font-size="10.6" fill="#fff" text-anchor="middle">Chiller A-313</text><line x1="1217" y1="255" x2="1217" y2="371" stroke="#2aa22e" stroke-width="2"/><text x="1173.2" y="291" font-size="13.4" fill="#fff" text-anchor="start" font-weight="bold">QF8</text><rect x="1210.8" y="300.6" width="12.4" height="12.4" fill="#3b4248" stroke="#2f9a35" stroke-width="1.3"/><text x="1190.4" y="311.2" font-size="10.2" fill="#cfcfcf" text-anchor="middle">630A</text><line x1="1177" y1="313.7" x2="1203.7" y2="313.7" stroke="#a9acae" stroke-width="0.9"/><text x="1190.4" y="324.9" font-size="10.2" fill="#cfcfcf" text-anchor="middle">630A</text><text x="1229.6" y="311.4" font-size="10.4" fill="#cfcfcf" text-anchor="start">3p</text><circle cx="1217" cy="347" r="6.2" fill="none" stroke="#2aa22e" stroke-width="1.1"/><path d="M1206.8 343.6H1210.4V350.4H1206.8" stroke="#2aa22e" stroke-width="1.1" fill="none" opacity="0.85"/><rect x="1227.6" y="328.2" width="32.4" height="11.5" fill="#9fd2d3" rx="2"/><text x="1243.8" y="336.83" font-size="7.9" fill="#142426" text-anchor="middle" stroke="#142426" stroke-width="0.25">0.0 A</text><rect x="1227.6" y="341.55" width="32.4" height="11.5" fill="#9fd2d3" rx="2"/><text x="1243.8" y="350.18" font-size="7.9" fill="#142426" text-anchor="middle" stroke="#142426" stroke-width="0.25">0.0 A</text><rect x="1227.6" y="354.9" width="32.4" height="11.5" fill="#9fd2d3" rx="2"/><text x="1243.8" y="363.53" font-size="7.9" fill="#142426" text-anchor="middle" stroke="#142426" stroke-width="0.25">0.0 A</text><text x="1213.8" y="364" font-size="8.2" fill="#bcbfc1" text-anchor="end">work</text><rect x="1180.6" y="371" width="72.6" height="15.5" fill="#6f7573" rx="2.5"/><text x="1216.9" y="382.5" font-size="10.6" fill="#fff" text-anchor="middle">Chiller A-314</text><line x1="1217" y1="149" x2="1217" y2="208" stroke="#2aa22e" stroke-width="2"/><line x1="1217" y1="220" x2="1217" y2="253" stroke="#2aa22e" stroke-width="2"/><rect x="1180.6" y="134.2" width="72.6" height="15.3" fill="#6f7573" rx="2.5"/><text x="1216.9" y="145.5" font-size="10.6" fill="#fff" text-anchor="middle">Chiller A-111</text><text x="1213.6" y="164.3" font-size="8.2" fill="#bcbfc1" text-anchor="end">res.</text><circle cx="1217" cy="173.9" r="6.2" fill="none" stroke="#2aa22e" stroke-width="1.1"/><path d="M1206.8 170.5H1210.4V177.3H1206.8" stroke="#2aa22e" stroke-width="1.1" fill="none" opacity="0.85"/><rect x="1227.6" y="154.5" width="32.4" height="11.3" fill="#9fd2d3" rx="2"/><text x="1243.8" y="163.03" font-size="7.9" fill="#142426" text-anchor="middle" stroke="#142426" stroke-width="0.25">0.0 A</text><rect x="1227.6" y="168.1" width="32.4" height="11.3" fill="#9fd2d3" rx="2"/><text x="1243.8" y="176.63" font-size="7.9" fill="#142426" text-anchor="middle" stroke="#142426" stroke-width="0.25">0.0 A</text><rect x="1227.6" y="181.7" width="32.4" height="11.3" fill="#9fd2d3" rx="2"/><text x="1243.8" y="190.23" font-size="7.9" fill="#142426" text-anchor="middle" stroke="#142426" stroke-width="0.25">0.0 A</text><text x="1173.2" y="197.4" font-size="13.4" fill="#fff" text-anchor="start" font-weight="bold">QF9</text><rect x="1210.8" y="207.6" width="12.4" height="12.4" fill="#3b4248" stroke="#2f9a35" stroke-width="1.3"/><text x="1190.4" y="218.2" font-size="10.2" fill="#cfcfcf" text-anchor="middle">630A</text><line x1="1177" y1="220.7" x2="1203.7" y2="220.7" stroke="#a9acae" stroke-width="0.9"/><text x="1190.4" y="231.9" font-size="10.2" fill="#cfcfcf" text-anchor="middle">630A</text><text x="1229.6" y="218.4" font-size="10.4" fill="#cfcfcf" text-anchor="start">3p</text></g>
<g><rect x="680.6" y="420.4" width="146.5" height="33.6" fill="#7a0b78" rx="2.5" stroke="#5a0a58" stroke-width="1"/><text x="753.8" y="447.6" font-size="26.2" fill="#fff" text-anchor="middle" stroke="#fff" stroke-width="0.35">1.MDB-4</text><rect x="623.7" y="542" width="616.7" height="3.7" fill="#f24e50"/><line x1="657.5" y1="545" x2="657.5" y2="661" stroke="#f24e50" stroke-width="1.7"/><text x="613.7" y="583" font-size="13.4" fill="#fff" text-anchor="start" font-weight="bold">QF1</text><path d="M652.2 577.9L657.5 571.6L662.8 577.9M652.2 582.8L657.5 576.5L662.8 582.8" stroke="#f24e50" stroke-width="1.4" fill="none"/><path d="M652.2 610.8L657.5 617L662.8 610.8M652.2 615.2L657.5 621.4L662.8 615.2" stroke="#f24e50" stroke-width="1.4" fill="none"/><rect x="650.7" y="590" width="13.6" height="13.6" fill="#f24e50"/><text x="630.9" y="601.2" font-size="10.2" fill="#cfcfcf" text-anchor="middle">1600A</text><line x1="617.5" y1="603.7" x2="644.2" y2="603.7" stroke="#a9acae" stroke-width="0.9"/><text x="630.9" y="614.9" font-size="10.2" fill="#cfcfcf" text-anchor="middle">1600A</text><text x="670.1" y="601.4" font-size="10.4" fill="#cfcfcf" text-anchor="start">3p</text><circle cx="657.5" cy="637" r="6.2" fill="none" stroke="#f24e50" stroke-width="1.1"/><path d="M647.3 633.6H650.9V640.4H647.3" stroke="#f24e50" stroke-width="1.1" fill="none" opacity="0.85"/><rect x="668.1" y="618.2" width="32.4" height="11.5" fill="#9fd2d3" rx="2"/><text x="684.3" y="626.83" font-size="7.9" fill="#142426" text-anchor="middle" stroke="#142426" stroke-width="0.25">39.3 A</text><rect x="668.1" y="631.55" width="32.4" height="11.5" fill="#9fd2d3" rx="2"/><text x="684.3" y="640.18" font-size="7.9" fill="#142426" text-anchor="middle" stroke="#142426" stroke-width="0.25">39.6 A</text><rect x="668.1" y="644.9" width="32.4" height="11.5" fill="#9fd2d3" rx="2"/><text x="684.3" y="653.53" font-size="7.9" fill="#142426" text-anchor="middle" stroke="#142426" stroke-width="0.25">39.6 A</text><rect x="621.1" y="661" width="72.6" height="15.5" fill="#6f7573" rx="2.5"/><text x="657.4" y="672.5" font-size="10.6" fill="#fff" text-anchor="middle">1.UPS4.1</text><line x1="737.5" y1="545" x2="737.5" y2="661" stroke="#f24e50" stroke-width="1.7"/><text x="693.7" y="583" font-size="13.4" fill="#fff" text-anchor="start" font-weight="bold">QF2</text><path d="M732.2 577.9L737.5 571.6L742.8 577.9M732.2 582.8L737.5 576.5L742.8 582.8" stroke="#f24e50" stroke-width="1.4" fill="none"/><path d="M732.2 610.8L737.5 617L742.8 610.8M732.2 615.2L737.5 621.4L742.8 615.2" stroke="#f24e50" stroke-width="1.4" fill="none"/><rect x="730.7" y="590" width="13.6" height="13.6" fill="#f24e50"/><text x="710.9" y="601.2" font-size="10.2" fill="#cfcfcf" text-anchor="middle">1600A</text><line x1="697.5" y1="603.7" x2="724.2" y2="603.7" stroke="#a9acae" stroke-width="0.9"/><text x="710.9" y="614.9" font-size="10.2" fill="#cfcfcf" text-anchor="middle">1600A</text><text x="750.1" y="601.4" font-size="10.4" fill="#cfcfcf" text-anchor="start">3p</text><circle cx="737.5" cy="637" r="6.2" fill="none" stroke="#f24e50" stroke-width="1.1"/><path d="M727.3 633.6H730.9V640.4H727.3" stroke="#f24e50" stroke-width="1.1" fill="none" opacity="0.85"/><rect x="748.1" y="618.2" width="32.4" height="11.5" fill="#9fd2d3" rx="2"/><text x="764.3" y="626.83" font-size="7.9" fill="#142426" text-anchor="middle" stroke="#142426" stroke-width="0.25">38.7 A</text><rect x="748.1" y="631.55" width="32.4" height="11.5" fill="#9fd2d3" rx="2"/><text x="764.3" y="640.18" font-size="7.9" fill="#142426" text-anchor="middle" stroke="#142426" stroke-width="0.25">39.0 A</text><rect x="748.1" y="644.9" width="32.4" height="11.5" fill="#9fd2d3" rx="2"/><text x="764.3" y="653.53" font-size="7.9" fill="#142426" text-anchor="middle" stroke="#142426" stroke-width="0.25">39.6 A</text><rect x="701.1" y="661" width="72.6" height="15.5" fill="#6f7573" rx="2.5"/><text x="737.4" y="672.5" font-size="10.6" fill="#fff" text-anchor="middle">1.UPS4.2</text><line x1="817.5" y1="545" x2="817.5" y2="570.5" stroke="#f24e50" stroke-width="1.7"/><line x1="817.5" y1="570.5" x2="817.5" y2="661" stroke="#2aa22e" stroke-width="2"/><text x="773.7" y="583" font-size="13.4" fill="#fff" text-anchor="start" font-weight="bold">QF3</text><path d="M812.2 577.9L817.5 571.6L822.8 577.9M812.2 582.8L817.5 576.5L822.8 582.8" stroke="#2aa22e" stroke-width="1.4" fill="none"/><path d="M812.2 610.8L817.5 617L822.8 610.8M812.2 615.2L817.5 621.4L822.8 615.2" stroke="#2aa22e" stroke-width="1.4" fill="none"/><rect x="811.8" y="591.1" width="11.4" height="11.4" fill="#3b4248" stroke="#2aa22e" stroke-width="2.2"/><text x="790.9" y="601.2" font-size="10.2" fill="#cfcfcf" text-anchor="middle">3200A</text><line x1="777.5" y1="603.7" x2="804.2" y2="603.7" stroke="#a9acae" stroke-width="0.9"/><text x="790.9" y="614.9" font-size="10.2" fill="#cfcfcf" text-anchor="middle">3200A</text><text x="830.1" y="601.4" font-size="10.4" fill="#cfcfcf" text-anchor="start">3p</text><circle cx="817.5" cy="637" r="6.2" fill="none" stroke="#2aa22e" stroke-width="1.1"/><path d="M807.3 633.6H810.9V640.4H807.3" stroke="#2aa22e" stroke-width="1.1" fill="none" opacity="0.85"/><rect x="828.1" y="618.2" width="32.4" height="11.5" fill="#9fd2d3" rx="2"/><text x="844.3" y="626.83" font-size="7.9" fill="#142426" text-anchor="middle" stroke="#142426" stroke-width="0.25">0.0 A</text><rect x="828.1" y="631.55" width="32.4" height="11.5" fill="#9fd2d3" rx="2"/><text x="844.3" y="640.18" font-size="7.9" fill="#142426" text-anchor="middle" stroke="#142426" stroke-width="0.25">0.0 A</text><rect x="828.1" y="644.9" width="32.4" height="11.5" fill="#9fd2d3" rx="2"/><text x="844.3" y="653.53" font-size="7.9" fill="#142426" text-anchor="middle" stroke="#142426" stroke-width="0.25">0.0 A</text><rect x="781.1" y="661" width="72.6" height="15.5" fill="#6f7573" rx="2.5"/><text x="817.4" y="672.5" font-size="10.6" fill="#fff" text-anchor="middle">1.BB4.1</text><line x1="897.5" y1="545" x2="897.5" y2="661" stroke="#f24e50" stroke-width="1.7"/><text x="853.7" y="583" font-size="13.4" fill="#fff" text-anchor="start" font-weight="bold">QF4</text><path d="M892.2 577.9L897.5 571.6L902.8 577.9M892.2 582.8L897.5 576.5L902.8 582.8" stroke="#f24e50" stroke-width="1.4" fill="none"/><path d="M892.2 610.8L897.5 617L902.8 610.8M892.2 615.2L897.5 621.4L902.8 615.2" stroke="#f24e50" stroke-width="1.4" fill="none"/><rect x="890.7" y="590" width="13.6" height="13.6" fill="#f24e50"/><text x="870.9" y="601.2" font-size="10.2" fill="#cfcfcf" text-anchor="middle">1000A</text><line x1="857.5" y1="603.7" x2="884.2" y2="603.7" stroke="#a9acae" stroke-width="0.9"/><text x="870.9" y="614.9" font-size="10.2" fill="#cfcfcf" text-anchor="middle">800A</text><text x="910.1" y="601.4" font-size="10.4" fill="#cfcfcf" text-anchor="start">3p</text><circle cx="897.5" cy="637" r="6.2" fill="none" stroke="#f24e50" stroke-width="1.1"/><path d="M887.3 633.6H890.9V640.4H887.3" stroke="#f24e50" stroke-width="1.1" fill="none" opacity="0.85"/><rect x="908.1" y="618.2" width="32.4" height="11.5" fill="#9fd2d3" rx="2"/><text x="924.3" y="626.83" font-size="7.9" fill="#142426" text-anchor="middle" stroke="#142426" stroke-width="0.25">82.5 A</text><rect x="908.1" y="631.55" width="32.4" height="11.5" fill="#9fd2d3" rx="2"/><text x="924.3" y="640.18" font-size="7.9" fill="#142426" text-anchor="middle" stroke="#142426" stroke-width="0.25">82.8 A</text><rect x="908.1" y="644.9" width="32.4" height="11.5" fill="#9fd2d3" rx="2"/><text x="924.3" y="653.53" font-size="7.9" fill="#142426" text-anchor="middle" stroke="#142426" stroke-width="0.25">83.0 A</text><rect x="861.1" y="661" width="72.6" height="15.5" fill="#6f7573" rx="2.5"/><text x="897.4" y="672.5" font-size="10.6" fill="#fff" text-anchor="middle">1.UPS4.3</text><line x1="977.5" y1="545" x2="977.5" y2="661" stroke="#f24e50" stroke-width="1.7"/><text x="933.7" y="583" font-size="13.4" fill="#fff" text-anchor="start" font-weight="bold">QF5</text><path d="M972.2 577.9L977.5 571.6L982.8 577.9M972.2 582.8L977.5 576.5L982.8 582.8" stroke="#f24e50" stroke-width="1.4" fill="none"/><path d="M972.2 610.8L977.5 617L982.8 610.8M972.2 615.2L977.5 621.4L982.8 615.2" stroke="#f24e50" stroke-width="1.4" fill="none"/><rect x="970.7" y="590" width="13.6" height="13.6" fill="#f24e50"/><text x="950.9" y="601.2" font-size="10.2" fill="#cfcfcf" text-anchor="middle">1000A</text><line x1="937.5" y1="603.7" x2="964.2" y2="603.7" stroke="#a9acae" stroke-width="0.9"/><text x="950.9" y="614.9" font-size="10.2" fill="#cfcfcf" text-anchor="middle">800A</text><text x="990.1" y="601.4" font-size="10.4" fill="#cfcfcf" text-anchor="start">3p</text><circle cx="977.5" cy="637" r="6.2" fill="none" stroke="#f24e50" stroke-width="1.1"/><path d="M967.3 633.6H970.9V640.4H967.3" stroke="#f24e50" stroke-width="1.1" fill="none" opacity="0.85"/><rect x="988.1" y="618.2" width="32.4" height="11.5" fill="#9fd2d3" rx="2"/><text x="1004.3" y="626.83" font-size="7.9" fill="#142426" text-anchor="middle" stroke="#142426" stroke-width="0.25">0.0 A</text><rect x="988.1" y="631.55" width="32.4" height="11.5" fill="#9fd2d3" rx="2"/><text x="1004.3" y="640.18" font-size="7.9" fill="#142426" text-anchor="middle" stroke="#142426" stroke-width="0.25">0.0 A</text><rect x="988.1" y="644.9" width="32.4" height="11.5" fill="#9fd2d3" rx="2"/><text x="1004.3" y="653.53" font-size="7.9" fill="#142426" text-anchor="middle" stroke="#142426" stroke-width="0.25">0.0 A</text><rect x="941.1" y="661" width="72.6" height="15.5" fill="#6f7573" rx="2.5"/><text x="977.4" y="672.5" font-size="10.6" fill="#fff" text-anchor="middle">1.UPSB-M-4</text><line x1="1057.5" y1="545" x2="1057.5" y2="661" stroke="#f24e50" stroke-width="1.7"/><text x="1013.7" y="583" font-size="13.4" fill="#fff" text-anchor="start" font-weight="bold">QF6</text><rect x="1050.7" y="590" width="13.6" height="13.6" fill="#f24e50"/><text x="1030.9" y="601.2" font-size="10.2" fill="#cfcfcf" text-anchor="middle">630A</text><line x1="1017.5" y1="603.7" x2="1044.2" y2="603.7" stroke="#a9acae" stroke-width="0.9"/><text x="1030.9" y="614.9" font-size="10.2" fill="#cfcfcf" text-anchor="middle">630A</text><text x="1070.1" y="601.4" font-size="10.4" fill="#cfcfcf" text-anchor="start">3p</text><circle cx="1057.5" cy="637" r="6.2" fill="none" stroke="#f24e50" stroke-width="1.1"/><path d="M1047.3 633.6H1050.9V640.4H1047.3" stroke="#f24e50" stroke-width="1.1" fill="none" opacity="0.85"/><rect x="1068.1" y="618.2" width="32.4" height="11.5" fill="#9fd2d3" rx="2"/><text x="1084.3" y="626.83" font-size="7.9" fill="#142426" text-anchor="middle" stroke="#142426" stroke-width="0.25">4.6 A</text><rect x="1068.1" y="631.55" width="32.4" height="11.5" fill="#9fd2d3" rx="2"/><text x="1084.3" y="640.18" font-size="7.9" fill="#142426" text-anchor="middle" stroke="#142426" stroke-width="0.25">4.6 A</text><rect x="1068.1" y="644.9" width="32.4" height="11.5" fill="#9fd2d3" rx="2"/><text x="1084.3" y="653.53" font-size="7.9" fill="#142426" text-anchor="middle" stroke="#142426" stroke-width="0.25">4.7 A</text><text x="1054.3" y="654" font-size="8.2" fill="#bcbfc1" text-anchor="end">work</text><rect x="1021.1" y="661" width="72.6" height="15.5" fill="#6f7573" rx="2.5"/><text x="1057.4" y="672.5" font-size="10.6" fill="#fff" text-anchor="middle">Chiller A-311</text><line x1="1137.5" y1="545" x2="1137.5" y2="661" stroke="#f24e50" stroke-width="1.7"/><text x="1093.7" y="583" font-size="13.4" fill="#fff" text-anchor="start" font-weight="bold">QF7</text><rect x="1130.7" y="590" width="13.6" height="13.6" fill="#f24e50"/><text x="1110.9" y="601.2" font-size="10.2" fill="#cfcfcf" text-anchor="middle">630A</text><line x1="1097.5" y1="603.7" x2="1124.2" y2="603.7" stroke="#a9acae" stroke-width="0.9"/><text x="1110.9" y="614.9" font-size="10.2" fill="#cfcfcf" text-anchor="middle">630A</text><text x="1150.1" y="601.4" font-size="10.4" fill="#cfcfcf" text-anchor="start">3p</text><circle cx="1137.5" cy="637" r="6.2" fill="none" stroke="#f24e50" stroke-width="1.1"/><path d="M1127.3 633.6H1130.9V640.4H1127.3" stroke="#f24e50" stroke-width="1.1" fill="none" opacity="0.85"/><rect x="1148.1" y="618.2" width="32.4" height="11.5" fill="#9fd2d3" rx="2"/><text x="1164.3" y="626.83" font-size="7.9" fill="#142426" text-anchor="middle" stroke="#142426" stroke-width="0.25">4.6 A</text><rect x="1148.1" y="631.55" width="32.4" height="11.5" fill="#9fd2d3" rx="2"/><text x="1164.3" y="640.18" font-size="7.9" fill="#142426" text-anchor="middle" stroke="#142426" stroke-width="0.25">4.6 A</text><rect x="1148.1" y="644.9" width="32.4" height="11.5" fill="#9fd2d3" rx="2"/><text x="1164.3" y="653.53" font-size="7.9" fill="#142426" text-anchor="middle" stroke="#142426" stroke-width="0.25">4.7 A</text><text x="1134.3" y="654" font-size="8.2" fill="#bcbfc1" text-anchor="end">work</text><rect x="1101.1" y="661" width="72.6" height="15.5" fill="#6f7573" rx="2.5"/><text x="1137.4" y="672.5" font-size="10.6" fill="#fff" text-anchor="middle">Chiller A-315</text><line x1="1217" y1="545" x2="1217" y2="661" stroke="#f24e50" stroke-width="1.7"/><text x="1173.2" y="581" font-size="13.4" fill="#fff" text-anchor="start" font-weight="bold">QF8</text><rect x="1210.2" y="590" width="13.6" height="13.6" fill="#f24e50"/><text x="1190.4" y="601.2" font-size="10.2" fill="#cfcfcf" text-anchor="middle">630A</text><line x1="1177" y1="603.7" x2="1203.7" y2="603.7" stroke="#a9acae" stroke-width="0.9"/><text x="1190.4" y="614.9" font-size="10.2" fill="#cfcfcf" text-anchor="middle">630A</text><text x="1229.6" y="601.4" font-size="10.4" fill="#cfcfcf" text-anchor="start">3p</text><circle cx="1217" cy="637" r="6.2" fill="none" stroke="#f24e50" stroke-width="1.1"/><path d="M1206.8 633.6H1210.4V640.4H1206.8" stroke="#f24e50" stroke-width="1.1" fill="none" opacity="0.85"/><rect x="1227.6" y="618.2" width="32.4" height="11.5" fill="#9fd2d3" rx="2"/><text x="1243.8" y="626.83" font-size="7.9" fill="#142426" text-anchor="middle" stroke="#142426" stroke-width="0.25">0.0 A</text><rect x="1227.6" y="631.55" width="32.4" height="11.5" fill="#9fd2d3" rx="2"/><text x="1243.8" y="640.18" font-size="7.9" fill="#142426" text-anchor="middle" stroke="#142426" stroke-width="0.25">0.0 A</text><rect x="1227.6" y="644.9" width="32.4" height="11.5" fill="#9fd2d3" rx="2"/><text x="1243.8" y="653.53" font-size="7.9" fill="#142426" text-anchor="middle" stroke="#142426" stroke-width="0.25">0.0 A</text><text x="1213.8" y="654" font-size="8.2" fill="#bcbfc1" text-anchor="end">res.</text><rect x="1180.6" y="661" width="72.6" height="15.5" fill="#6f7573" rx="2.5"/><text x="1216.9" y="672.5" font-size="10.6" fill="#fff" text-anchor="middle">Chiller A-312</text><line x1="1217" y1="432.5" x2="1217" y2="491.5" stroke="#2aa22e" stroke-width="2"/><line x1="1217" y1="503.5" x2="1217" y2="543" stroke="#f24e50" stroke-width="1.7"/><rect x="1180.6" y="417.7" width="72.6" height="15.3" fill="#6f7573" rx="2.5"/><text x="1216.9" y="429" font-size="10.6" fill="#fff" text-anchor="middle">Chiller A-113</text><text x="1213.6" y="447.8" font-size="8.2" fill="#bcbfc1" text-anchor="end">res.</text><circle cx="1217" cy="457.4" r="6.2" fill="none" stroke="#2aa22e" stroke-width="1.1"/><path d="M1206.8 454H1210.4V460.8H1206.8" stroke="#2aa22e" stroke-width="1.1" fill="none" opacity="0.85"/><rect x="1227.6" y="438" width="32.4" height="11.3" fill="#9fd2d3" rx="2"/><text x="1243.8" y="446.53" font-size="7.9" fill="#142426" text-anchor="middle" stroke="#142426" stroke-width="0.25">0.0 A</text><rect x="1227.6" y="451.6" width="32.4" height="11.3" fill="#9fd2d3" rx="2"/><text x="1243.8" y="460.13" font-size="7.9" fill="#142426" text-anchor="middle" stroke="#142426" stroke-width="0.25">0.0 A</text><rect x="1227.6" y="465.2" width="32.4" height="11.3" fill="#9fd2d3" rx="2"/><text x="1243.8" y="473.73" font-size="7.9" fill="#142426" text-anchor="middle" stroke="#142426" stroke-width="0.25">0.0 A</text><rect x="1169" y="467.5" width="37.5" height="16.8" fill="#5d6163" rx="4"/><text x="1173.2" y="480.9" font-size="13.4" fill="#fff" text-anchor="start" font-weight="bold">QF9</text><rect x="1210.8" y="491.1" width="12.4" height="12.4" fill="#3b4248" stroke="#2f9a35" stroke-width="1.3"/><text x="1190.4" y="501.7" font-size="10.2" fill="#cfcfcf" text-anchor="middle">630A</text><line x1="1177" y1="504.2" x2="1203.7" y2="504.2" stroke="#a9acae" stroke-width="0.9"/><text x="1190.4" y="515.4" font-size="10.2" fill="#cfcfcf" text-anchor="middle">630A</text><text x="1229.6" y="501.9" font-size="10.4" fill="#cfcfcf" text-anchor="start">3p</text></g>
<g><rect x="345.5" y="182.5" width="426" height="401.2" fill="#d5d6d6" stroke="#c8c8c8" stroke-width="1"/><rect x="345" y="182" width="427" height="12.8" fill="#dfdbfd"/><text x="351.6" y="191.3" font-size="7.6" fill="#111" text-anchor="start" style="font-family:'Liberation Sans',sans-serif">QF4</text><line x1="749.5" y1="190.3" x2="756.5" y2="190.3" stroke="#555" stroke-width="1"/><path d="M763.2 185.2L768.2 190.2M768.2 185.2L763.2 190.2" stroke="#333" stroke-width="1" fill="none"/><line x1="411.4" y1="240.3" x2="411.4" y2="324" stroke="#f24e50" stroke-width="1.5"/><text x="370.6" y="250.4" font-size="12.3" fill="#fff" text-anchor="start" font-weight="bold">QF4</text><path d="M406.6 245.4L411.4 239.8L416.2 245.4M406.6 249.7L411.4 244.1L416.2 249.7" stroke="#f24e50" stroke-width="1.3" fill="none"/><rect x="405.4" y="258.2" width="12.2" height="12" fill="#f24e50"/><text x="385.8" y="268.4" font-size="9.1" fill="#bdbdbd" text-anchor="middle">1000A</text><line x1="372.4" y1="270.6" x2="399" y2="270.6" stroke="#c2c2c2" stroke-width="1"/><text x="385.8" y="280.2" font-size="9.1" fill="#bdbdbd" text-anchor="middle">800A</text><text x="423.2" y="268.6" font-size="9.3" fill="#bdbdbd" text-anchor="start">3p</text><path d="M406.6 274.5L411.4 280.1L416.2 274.5M406.6 278.7L411.4 284.3L416.2 278.7" stroke="#f24e50" stroke-width="1.3" fill="none"/><circle cx="411.4" cy="302.2" r="5.9" fill="none" stroke="#f24e50" stroke-width="1.1"/><path d="M401.4 299.2H405.1V305.2H401.4" stroke="#f24e50" stroke-width="1" fill="none" opacity="0.85"/><rect x="421.2" y="283.9" width="30.2" height="10.9" fill="#b7e5e5" rx="2.5" stroke="#27474a" stroke-width="1"/><text x="436.3" y="292.4" font-size="7.8" fill="#0a1a1a" text-anchor="middle" stroke="#0a1a1a" stroke-width="0.3">122.0 A</text><rect x="421.2" y="296.4" width="30.2" height="10.9" fill="#b7e5e5" rx="2.5" stroke="#27474a" stroke-width="1"/><text x="436.3" y="304.9" font-size="7.8" fill="#0a1a1a" text-anchor="middle" stroke="#0a1a1a" stroke-width="0.3">124.2 A</text><rect x="421.2" y="308.9" width="30.2" height="10.9" fill="#b7e5e5" rx="2.5" stroke="#27474a" stroke-width="1"/><text x="436.3" y="317.4" font-size="7.8" fill="#0a1a1a" text-anchor="middle" stroke="#0a1a1a" stroke-width="0.3">123.6 A</text><rect x="376.8" y="324.2" width="68.8" height="14.6" fill="#d9d8ca" rx="2.5" stroke="#7d7d70" stroke-width="1"/><text x="411.2" y="335.6" font-size="10.2" fill="#f6f6ee" text-anchor="middle">1.UPS1.3</text><text x="464.8" y="231.1" font-size="11.2" fill="#0d0d0d" text-anchor="start">Авария</text><rect x="534.2" y="221.4" width="37" height="11" fill="#b7e5e5" rx="3" stroke="#27474a" stroke-width="1"/><text x="552.7" y="230.6" font-size="11.2" fill="#10201f" text-anchor="middle">false</text><text x="464.8" y="243.7" font-size="11.2" fill="#0d0d0d" text-anchor="start">Включен</text><rect x="534.2" y="234" width="37" height="11" fill="#b7e5e5" rx="3" stroke="#27474a" stroke-width="1"/><text x="552.7" y="243.2" font-size="11.2" fill="#10201f" text-anchor="middle">false</text><text x="464.8" y="256.3" font-size="11.2" fill="#0d0d0d" text-anchor="start">Выключен</text><rect x="534.2" y="246.6" width="37" height="11" fill="#b7e5e5" rx="3" stroke="#27474a" stroke-width="1"/><text x="552.7" y="255.8" font-size="11.2" fill="#10201f" text-anchor="middle">false</text><text x="464.8" y="268.9" font-size="11.2" fill="#0d0d0d" text-anchor="start">Тест</text><rect x="534.2" y="259.2" width="37" height="11" fill="#b7e5e5" rx="3" stroke="#27474a" stroke-width="1"/><text x="552.7" y="268.4" font-size="11.2" fill="#10201f" text-anchor="middle">false</text><text x="464.8" y="281.5" font-size="11.2" fill="#0d0d0d" text-anchor="start">Подключен</text><rect x="534.2" y="271.8" width="37" height="11" fill="#b7e5e5" rx="3" stroke="#27474a" stroke-width="1"/><text x="552.7" y="281" font-size="11.2" fill="#10201f" text-anchor="middle">true</text><text x="464.8" y="294.1" font-size="11.2" fill="#0d0d0d" text-anchor="start">Изолирован</text><rect x="534.2" y="284.4" width="37" height="11" fill="#b7e5e5" rx="3" stroke="#27474a" stroke-width="1"/><text x="552.7" y="293.6" font-size="11.2" fill="#10201f" text-anchor="middle">false</text><text x="464.8" y="306.7" font-size="11.2" fill="#0d0d0d" text-anchor="start">Извлечен</text><rect x="534.2" y="297" width="37" height="11" fill="#b7e5e5" rx="3" stroke="#27474a" stroke-width="1"/><text x="552.7" y="306.2" font-size="11.2" fill="#10201f" text-anchor="middle">false</text><rect x="579" y="203" width="188.6" height="80.8" fill="#afb2b3" rx="6"/><text x="584.4" y="218.4" font-size="11.2" fill="#0d0d0d" text-anchor="start">Мониторинг</text><text x="678.2" y="218.4" font-size="11.2" fill="#0d0d0d" text-anchor="start">Включен</text><rect x="747.7" y="207.8" width="12" height="12" fill="#fff" rx="1" stroke="#9a9a9a" stroke-width="1"/><path d="M750.2 214L752.8 216.8L757.4 210.6" stroke="#111" stroke-width="1.4" fill="none"/><text x="584.4" y="237.2" font-size="11.2" fill="#0d0d0d" text-anchor="start">Приоритет</text><text x="659.3" y="237.2" font-size="11.2" fill="#0d0d0d" text-anchor="start">500</text><rect x="684.8" y="227.2" width="43" height="11.2" fill="#cdcdcd" stroke="#a2a2a2" stroke-width="1"/><line x1="692.6" y1="227.2" x2="692.6" y2="238.4" stroke="#9a9a9a" stroke-width="1"/><line x1="720.4" y1="227.2" x2="720.4" y2="238.4" stroke="#9a9a9a" stroke-width="1"/><path d="M686.6 232.8H690.8M722.2 232.8H726.6M724.4 230.4V235.2" stroke="#555" stroke-width="1" fill="none"/><text x="706.4" y="235.8" font-size="7.8" fill="#222" text-anchor="middle" style="font-family:'Liberation Sans',sans-serif">500</text><rect x="729.2" y="227.2" width="29.8" height="11.2" fill="#ebebeb" stroke="#b0b0b0" stroke-width="1"/><text x="744.1" y="235.8" font-size="7.8" fill="#222" text-anchor="middle" style="font-family:'Liberation Sans',sans-serif">SET</text><text x="584.4" y="256" font-size="11.2" fill="#0d0d0d" text-anchor="start">Нормально</text><rect x="653.4" y="245.6" width="87.6" height="11.8" fill="#fff"/><text x="660.4" y="255.1" font-size="10" fill="#111" text-anchor="start" style="font-family:'Liberation Sans',sans-serif">ВКЛЮЧЕН</text><path d="M724.2 248.8H734.6L729.4 254.4Z" stroke="#000" stroke-width="0" fill="#000"/><text x="584.4" y="274.9" font-size="11.2" fill="#0d0d0d" text-anchor="start">Halk BigData</text><rect x="653.6" y="264.6" width="12" height="12" fill="#e6e6e6" rx="1" stroke="#a8a8a8" stroke-width="1"/><rect x="691" y="264.6" width="49.8" height="12" fill="#ededed" rx="0.5" stroke="#a8a8a8" stroke-width="1"/><text x="715.9" y="273.4" font-size="7.8" fill="#111" text-anchor="middle" style="font-family:'Liberation Sans',sans-serif">Настройки</text><text x="537" y="331.2" font-size="11.2" fill="#0d0d0d" text-anchor="start">V1</text><rect x="553.2" y="321" width="49.2" height="11.8" fill="#b7e5e5" rx="3" stroke="#27474a" stroke-width="1"/><text x="577.8" y="331" font-size="11.2" fill="#10201f" text-anchor="middle">234.4 V</text><text x="607.9" y="331.2" font-size="11.2" fill="#0d0d0d" text-anchor="start">I1</text><rect x="621.9" y="321" width="49.6" height="11.8" fill="#b7e5e5" rx="3" stroke="#27474a" stroke-width="1"/><text x="646.7" y="331" font-size="11.2" fill="#10201f" text-anchor="middle">122.0 A</text><text x="677.2" y="331.2" font-size="11.2" fill="#0d0d0d" text-anchor="start">Full P1</text><rect x="716.4" y="321" width="49.6" height="11.8" fill="#b7e5e5" rx="3" stroke="#27474a" stroke-width="1"/><text x="741.2" y="331" font-size="11.2" fill="#10201f" text-anchor="middle">28.6 kW</text><text x="537" y="343.8" font-size="11.2" fill="#0d0d0d" text-anchor="start">V2</text><rect x="553.2" y="333.6" width="49.2" height="11.8" fill="#b7e5e5" rx="3" stroke="#27474a" stroke-width="1"/><text x="577.8" y="343.6" font-size="11.2" fill="#10201f" text-anchor="middle">234.3 V</text><text x="607.9" y="343.8" font-size="11.2" fill="#0d0d0d" text-anchor="start">I2</text><rect x="621.9" y="333.6" width="49.6" height="11.8" fill="#b7e5e5" rx="3" stroke="#27474a" stroke-width="1"/><text x="646.7" y="343.6" font-size="11.2" fill="#10201f" text-anchor="middle">124.2 A</text><text x="677.2" y="343.8" font-size="11.2" fill="#0d0d0d" text-anchor="start">Full P2</text><rect x="716.4" y="333.6" width="49.6" height="11.8" fill="#b7e5e5" rx="3" stroke="#27474a" stroke-width="1"/><text x="741.2" y="343.6" font-size="11.2" fill="#10201f" text-anchor="middle">29.1 kW</text><text x="537" y="356.4" font-size="11.2" fill="#0d0d0d" text-anchor="start">V3</text><rect x="553.2" y="346.2" width="49.2" height="11.8" fill="#b7e5e5" rx="3" stroke="#27474a" stroke-width="1"/><text x="577.8" y="356.2" font-size="11.2" fill="#10201f" text-anchor="middle">234.7 V</text><text x="607.9" y="356.4" font-size="11.2" fill="#0d0d0d" text-anchor="start">I3</text><rect x="621.9" y="346.2" width="49.6" height="11.8" fill="#b7e5e5" rx="3" stroke="#27474a" stroke-width="1"/><text x="646.7" y="356.2" font-size="11.2" fill="#10201f" text-anchor="middle">123.6 A</text><text x="677.2" y="356.4" font-size="11.2" fill="#0d0d0d" text-anchor="start">Full P3</text><rect x="716.4" y="346.2" width="49.6" height="11.8" fill="#b7e5e5" rx="3" stroke="#27474a" stroke-width="1"/><text x="741.2" y="356.2" font-size="11.2" fill="#10201f" text-anchor="middle">29.0 kW</text><text x="709.6" y="375.4" font-size="10.95" fill="#0d0d0d" text-anchor="end">Суммарная полная мощность</text><rect x="716.4" y="365.2" width="49.6" height="11.8" fill="#b7e5e5" rx="3" stroke="#27474a" stroke-width="1"/><text x="741.2" y="375.2" font-size="11.2" fill="#10201f" text-anchor="middle">86.8</text><text x="709.6" y="387.9" font-size="10.95" fill="#0d0d0d" text-anchor="end">Активная энергия Принятая по перв. стороне</text><rect x="716.4" y="377.7" width="49.6" height="11.8" fill="#b7e5e5" rx="3" stroke="#27474a" stroke-width="1"/><text x="741.2" y="387.7" font-size="11.2" fill="#10201f" text-anchor="middle">273.3</text><text x="709.6" y="400.4" font-size="10.95" fill="#0d0d0d" text-anchor="end">Реактивная энергия Принятая по перв. стороне</text><rect x="716.4" y="390.2" width="49.6" height="11.8" fill="#b7e5e5" rx="3" stroke="#27474a" stroke-width="1"/><text x="741.2" y="400.2" font-size="11.2" fill="#10201f" text-anchor="middle">0.0</text><text x="377.8" y="429" font-size="11.2" fill="#0d0d0d" text-anchor="start">Информация</text><rect x="458.2" y="414.9" width="75.2" height="18.9" fill="#f2f1f2" rx="1" stroke="#a6a6a6" stroke-width="1"/><text x="495.8" y="428" font-size="10" fill="#111" text-anchor="middle" style="font-family:'Liberation Sans',sans-serif">Изменить</text><rect x="358.2" y="440.2" width="407.6" height="137.2" fill="#f1eff2" stroke="#a8a8a8" stroke-width="1"/></g>
<svg x="772.6" y="176" width="398" height="222.2" viewBox="772.6 176 398 222.2" overflow="hidden"><g><rect x="773.1" y="176.5" width="397" height="221.2" fill="#f7f0f4" stroke="#bdbdc8" stroke-width="1"/><rect x="773.6" y="177" width="396" height="13.2" fill="#dfdbfd"/><rect x="773.6" y="190.2" width="396" height="19.4" fill="#fbf9fb"/><text x="779.8" y="186.5" font-size="7.5" fill="#1c1c1c" text-anchor="start" style="font-family:'Liberation Sans',sans-serif">График напряжения</text><line x1="1146.2" y1="185.4" x2="1153.6" y2="185.4" stroke="#666" stroke-width="1"/><path d="M1160.2 181l5 5m0 -5l-5 5" stroke="#222" stroke-width="1" fill="none"/><g transform="translate(784.3 199.6)"><path d="M-3.8 -4.6L4 0L-3.8 4.6Z" stroke="#141414" stroke-width="1.2" fill="none" stroke-linejoin="round"/></g><g transform="translate(805.11 199.6)"><path d="M-3.6 -3.4V3.4H2.2M-3.6 -0.2H2.2" stroke="#141414" stroke-width="1.1" fill="none"/><rect x="-5.3" y="-6.2" width="3.4" height="3.2" fill="#fbf9fb" rx="0.8" stroke="#141414" stroke-width="1"/><circle cx="3.8" cy="-0.2" r="1.6" fill="#fbf9fb" stroke="#141414"/><circle cx="3.8" cy="3.6" r="1.6" fill="#fbf9fb" stroke="#141414"/></g><g transform="translate(825.92 199.6)"><rect x="-5.3" y="-4" width="10.6" height="8.2" fill="none" rx="1.2" stroke="#141414" stroke-width="1.3"/><path d="M-5.3 -1.3H5.3M-5.3 1.4H5.3M-2.2 -4V4.2" stroke="#141414" stroke-width="1.1" fill="none"/></g><g transform="translate(846.73 199.6)"><path d="M-4.2 -0.6V4.4H4.2V-0.6M0 2V-5M-2.6 -2.6L0 -5.2L2.6 -2.6" stroke="#141414" stroke-width="1.25" fill="none" stroke-linejoin="round"/></g><g transform="translate(867.54 199.6)"><path d="M-0.6 -3.6L-4 0L-0.6 3.6M3.8 -3.6L0.4 0L3.8 3.6" stroke="#141414" stroke-width="1.5" fill="none"/></g><g transform="translate(888.35 199.6)"><path d="M1.6 -3.6L-1.8 0L1.6 3.6" stroke="#141414" stroke-width="1.5" fill="none"/></g><g transform="translate(909.16 199.6)"><path d="M-1.6 -3.6L1.8 0L-1.6 3.6" stroke="#141414" stroke-width="1.5" fill="none"/></g><g transform="translate(929.97 199.6)"><path d="M0.6 -3.6L4 0L0.6 3.6M-3.8 -3.6L-0.4 0L-3.8 3.6" stroke="#141414" stroke-width="1.5" fill="none"/></g><g transform="translate(950.78 199.6)"><path d="M-5 -6V5.4H6M-2 5.4V0.4H1.4V-5.6H4.4V5.4M-2 2L4.6 -2.4" stroke="#444" stroke-width="1" fill="none"/></g><g transform="translate(971.59 199.6)"><path d="M-4 -5V5H5M-1.6 5V-1H1.4V-5.2H4V5M-5.4 -5.6L5.6 5.6M5.4 -5.4L-5.4 5.6" stroke="#333" stroke-width="1" fill="none"/></g><g transform="translate(992.4 199.6)"><path d="M0 -5.4L1.5 -1.7L5.4 -1.5L2.4 1L3.4 4.8L0 2.7L-3.4 4.8L-2.4 1L-5.4 -1.5L-1.5 -1.7Z" stroke="#141414" stroke-width="0.5" fill="#141414"/></g><g transform="translate(1013.21 199.6)"><rect x="-4.6" y="-4.8" width="10" height="8.4" fill="#e4e4e4" stroke="#8a8a8a" stroke-width="1"/><path d="M-5.6 -4.4V5H4.6" stroke="#8a8a8a" stroke-width="1" fill="none"/><path d="M-3.6 -0.6C-1 -2.6 1.4 0.6 4.6 -2.2M-3.6 1.8C-1 0 1.4 3 4.6 0.4" stroke="#777" stroke-width="0.9" fill="none"/></g><g transform="translate(1034.02 199.6)"><text x="0" y="2" font-size="5.6" fill="#222" text-anchor="middle" font-weight="bold" style="font-family:'Liberation Sans',sans-serif">LOG</text></g><g transform="translate(1054.83 199.6)"><rect x="-5.2" y="-5.8" width="6.6" height="11.8" fill="#dcdcdc" stroke="#555" stroke-width="1"/><path d="M-5.2 0H1.4M4.4 -6V6.2M3.4 -6H5.4M3.4 6.2H5.4" stroke="#555" stroke-width="1" fill="none"/></g><rect x="1066.44" y="190.6" width="18.4" height="18" fill="#b9c9e9"/><g transform="translate(1075.64 199.6)"><rect x="-5.8" y="-2.6" width="11.6" height="7.8" fill="#e6e6e6" stroke="#444" stroke-width="1.1"/><path d="M0 -2.6V5.2M-5.8 -5.6H5.8M-5.8 -6.4V-4.6M5.8 -6.4V-4.6" stroke="#444" stroke-width="1" fill="none"/></g><g transform="translate(1096.45 199.6)"><path d="M-2.4 -3.2H5.4M-2.4 0H5.4M-2.4 3.2H5.4" stroke="#141414" stroke-width="1.7" fill="none"/><path d="M-5.4 -3.2H-4M-5.4 0H-4M-5.4 3.2H-4" stroke="#141414" stroke-width="1.7" fill="none"/></g><g transform="translate(1117.26 199.6)"><rect x="-4.8" y="-1.6" width="9.6" height="5" fill="none" rx="1.4" stroke="#141414" stroke-width="1.3"/><rect x="-2.6" y="-4.6" width="5.2" height="3" fill="none" stroke="#141414" stroke-width="1.2"/><rect x="-2.6" y="1.6" width="5.2" height="3.2" fill="#fbf9fb" stroke="#141414" stroke-width="1.2"/></g><g transform="translate(1138.07 199.6)"><rect x="-6.6" y="-3.8" width="13.2" height="9.4" fill="none" rx="1.6" stroke="#141414" stroke-width="1.3"/><path d="M1.8 -3.8L2.8 -6.2H5.4L6 -3.8" stroke="#141414" stroke-width="1.1" fill="none"/><circle cx="0" cy="1" r="3.1" fill="none" stroke="#141414" stroke-width="1.1"/><circle cx="0" cy="1" r="1.3" fill="none" stroke="#141414" stroke-width="1"/></g><g transform="translate(1158.88 199.6)"><path d="M-5.6 1.2A5.6 5.6 0 0 1 3.6 -4.4M5.6 -1.2A5.6 5.6 0 0 1 -3.6 4.4M1.4 -5.8L4 -4.4L2.8 -1.8M-1.4 5.8L-4 4.4L-2.8 1.8" stroke="#141414" stroke-width="1.1" fill="none"/><circle cx="0" cy="0" r="2" fill="none" stroke="#141414" stroke-width="1.1"/><path d="M-4.6 4.6L4.6 -4.6" stroke="#141414" stroke-width="0.9" fill="none"/></g><rect x="813" y="227.6" width="347.2" height="110.6" fill="#fff" stroke="#d6d6d6" stroke-width="1"/><line x1="813" y1="249.72" x2="1160.2" y2="249.72" stroke="#cfcfcf" stroke-width="1"/><line x1="813" y1="271.84" x2="1160.2" y2="271.84" stroke="#cfcfcf" stroke-width="1"/><line x1="813" y1="293.96" x2="1160.2" y2="293.96" stroke="#cfcfcf" stroke-width="1"/><line x1="813" y1="316.08" x2="1160.2" y2="316.08" stroke="#cfcfcf" stroke-width="1"/><line x1="857.3" y1="227.6" x2="857.3" y2="338.2" stroke="#c9c9c9" stroke-width="1"/><line x1="919.4" y1="227.6" x2="919.4" y2="338.2" stroke="#c9c9c9" stroke-width="1"/><line x1="982" y1="227.6" x2="982" y2="338.2" stroke="#c9c9c9" stroke-width="1"/><line x1="1044.6" y1="227.6" x2="1044.6" y2="338.2" stroke="#c9c9c9" stroke-width="1"/><line x1="1107.7" y1="227.6" x2="1107.7" y2="338.2" stroke="#c9c9c9" stroke-width="1"/><line x1="813" y1="227.6" x2="813" y2="338.2" stroke="#e25a5a" stroke-width="1.2"/><line x1="808.4" y1="227.6" x2="813" y2="227.6" stroke="#555" stroke-width="1"/><text x="808.6" y="230.3" font-size="8" fill="#d63a3a" text-anchor="end" style="font-family:'Liberation Serif',serif">250</text><line x1="808.4" y1="249.72" x2="813" y2="249.72" stroke="#555" stroke-width="1"/><text x="808.6" y="252.42" font-size="8" fill="#d63a3a" text-anchor="end" style="font-family:'Liberation Serif',serif">200</text><line x1="808.4" y1="271.84" x2="813" y2="271.84" stroke="#555" stroke-width="1"/><text x="808.6" y="274.54" font-size="8" fill="#d63a3a" text-anchor="end" style="font-family:'Liberation Serif',serif">150</text><line x1="808.4" y1="293.96" x2="813" y2="293.96" stroke="#555" stroke-width="1"/><text x="808.6" y="296.66" font-size="8" fill="#d63a3a" text-anchor="end" style="font-family:'Liberation Serif',serif">100</text><line x1="808.4" y1="316.08" x2="813" y2="316.08" stroke="#555" stroke-width="1"/><text x="808.6" y="318.78" font-size="8" fill="#d63a3a" text-anchor="end" style="font-family:'Liberation Serif',serif">50</text><line x1="808.4" y1="338.2" x2="813" y2="338.2" stroke="#555" stroke-width="1"/><text x="808.6" y="340.9" font-size="8" fill="#d63a3a" text-anchor="end" style="font-family:'Liberation Serif',serif">0</text><text transform="translate(795.4 282.9) rotate(-90)" font-size="7.5" fill="#d63a3a" text-anchor="middle" style="font-family:'Liberation Serif',serif">Напряжение</text><line x1="812" y1="338.2" x2="1160.2" y2="338.2" stroke="#444" stroke-width="1.2"/><line x1="813" y1="338.2" x2="813" y2="341.6" stroke="#444" stroke-width="1"/><text x="813" y="349.4" font-size="7.5" fill="#1c1c1c" text-anchor="middle" style="font-family:'Liberation Sans',sans-serif">13.04.2025</text><text x="813" y="356.9" font-size="7.5" fill="#1c1c1c" text-anchor="middle" style="font-family:'Liberation Sans',sans-serif">06:55:56</text><line x1="919.4" y1="338.2" x2="919.4" y2="341.6" stroke="#444" stroke-width="1"/><text x="919.4" y="349.4" font-size="7.5" fill="#1c1c1c" text-anchor="middle" style="font-family:'Liberation Sans',sans-serif">15.04.2025</text><text x="919.4" y="356.9" font-size="7.5" fill="#1c1c1c" text-anchor="middle" style="font-family:'Liberation Sans',sans-serif">00:00:00</text><line x1="982" y1="338.2" x2="982" y2="341.6" stroke="#444" stroke-width="1"/><text x="982" y="349.4" font-size="7.5" fill="#1c1c1c" text-anchor="middle" style="font-family:'Liberation Sans',sans-serif">16.04.2025</text><text x="982" y="356.9" font-size="7.5" fill="#1c1c1c" text-anchor="middle" style="font-family:'Liberation Sans',sans-serif">00:00:00</text><line x1="1044.6" y1="338.2" x2="1044.6" y2="341.6" stroke="#444" stroke-width="1"/><text x="1044.6" y="349.4" font-size="7.5" fill="#1c1c1c" text-anchor="middle" style="font-family:'Liberation Sans',sans-serif">17.04.2025</text><text x="1044.6" y="356.9" font-size="7.5" fill="#1c1c1c" text-anchor="middle" style="font-family:'Liberation Sans',sans-serif">00:00:00</text><line x1="1160.2" y1="338.2" x2="1160.2" y2="341.6" stroke="#444" stroke-width="1"/><text x="1160.2" y="349.4" font-size="7.5" fill="#1c1c1c" text-anchor="middle" style="font-family:'Liberation Sans',sans-serif">18.04.2025</text><text x="1160.2" y="356.9" font-size="7.5" fill="#1c1c1c" text-anchor="middle" style="font-family:'Liberation Sans',sans-serif">20:13:13</text><polyline points="813,232.53 814.5,232.91 816,232.86 817.5,233.49 819,233.4 820.5,233.67 822,234.02 823.5,233.91 825,234.37 826.5,234.26 828,234.55 829.5,234.61 831,234.48 832.5,234.3 834,234.81 835.5,234.82 837,234.64 838.5,234.51 840,234.81 841.5,234.9 843,234.52 844.5,235.08 846,234.55 847.5,234.88 849,234.95 850.5,234.95 852,234.81 853.5,234.47 855,234.85 856.5,233.98 858,232.12 859.5,232.53 861,232.67 862.5,233.05 864,232.81 865.5,232.47 867,232.11 868.5,232.29 870,232.38 871.5,232.24 873,232.34 874.5,232.46 876,232.18 877.5,232.26 879,232.57 880.5,232.6 882,233.29 883.5,233.74 885,234.24 886.5,234.79 888,234.63 889.5,235.44 891,235.34 892.5,235.12 894,235.48 895.5,235.26 897,235.52 898.5,235.12 900,235.05 901.5,235.15 903,234.95 904.5,235.29 906,235.04 907.5,235.09 909,235.08 910.5,235.15 912,234.89 913.5,234.82 915,235.09 916.5,234.74 918,234.88 919.5,234.24 921,234.04 922.5,233.6 924,233.51 925.5,233.64 927,233.38 928.5,233.2 930,233.6 931.5,233.33 933,233.51 934.5,233.55 936,233.58 937.5,233.14 939,233.54 940.5,233.47 942,233.38 943.5,233.27 945,234.34 946.5,234.7 948,234.96 949.5,234.95 951,235.19 952.5,235.29 954,235.62 955.5,235.51 957,235.51 958.5,235.16 960,235.08 961.5,235.55 963,235.51 964.5,235.45 966,235.42 967.5,235.23 969,235.14 970.5,235.31 972,235.44 973.5,235.16 975,235.16 976.5,234.87 978,234.47 979.5,234.46 981,234.41 982.5,234.18 984,233.97 985.5,234.18 987,233.46 988.5,233.33 990,233.08 991.5,233.15 993,233.42 994.5,233.44 996,233.64 997.5,233.34 999,233.71 1000.5,233.73 1002,233.67 1003.5,233.72 1005,233.63 1006.5,234.04 1008,234.31 1009.5,234.46 1011,234.72 1012.5,234.75 1014,235.06 1015.5,234.64 1017,234.9 1018.5,235.29 1020,235.32 1021.5,235.36 1023,235.36 1024.5,235.47 1026,234.99 1027.5,234.86 1029,235.15 1030.5,235.1 1032,235.31 1033.5,235.26 1035,235.08 1036.5,235.09 1038,234.7 1039.5,235.08 1041,235.04 1042.5,234.3 1044,234.4 1045.5,234.47 1047,234.06 1048.5,234.21 1050,233.73 1051.5,233.33 1053,233.28 1054.5,233.26 1056,233.4 1057.5,233.21 1059,233.32 1060.5,232.99 1062,233.18 1063.5,233.07 1065,233.39 1066.5,233.63 1068,233.71 1069.5,234.04 1071,234.57 1072.5,235.02 1074,235.4 1075.5,235.83 1077,236.54 1078.5,236.6 1080,236.64 1081.5,236.79 1083,236.73 1084.5,236.46 1086,236.22 1087.5,235.71 1089,235.29 1090.5,235.36 1092,234.81 1093.5,234.65 1095,234.55 1096.5,234.79 1098,234.75 1099.5,234.63 1101,234.55 1102.5,234.46 1104,234.12 1105.5,233.86 1107,233.82 1108.5,233.94 1110,233.71 1111.5,233.5 1113,233.81 1114.5,233.33 1116,233.06 1117.5,233.09 1119,233.07 1120.5,233.2 1122,233.34 1123.5,232.92 1125,233.45 1126.5,233.55 1128,233.83 1129.5,234.57 1131,234.92 1132.5,234.91 1134,235.38 1135.5,236.06 1137,236.08 1138.5,235.9 1140,235.27 1141.5,235 1143,235.08 1144.5,234.32 1146,233.9 1147.5,234.12 1149,234.33 1150.5,234.23 1152,234.52 1153.5,234.61 1155,234.04 1156.5,234.27 1158,234.37 1159.5,234.14" fill="none" stroke="#b0206a" stroke-width="1.9" stroke-linejoin="round"/><polyline points="813,232.13 814.5,232.51 816,232.46 817.5,233.09 819,233 820.5,233.27 822,233.62 823.5,233.51 825,233.97 826.5,233.86 828,234.15 829.5,234.21 831,234.08 832.5,233.9 834,234.41 835.5,234.42 837,234.24 838.5,234.11 840,234.41 841.5,234.5 843,234.12 844.5,234.68 846,234.15 847.5,234.48 849,234.55 850.5,234.55 852,234.41 853.5,234.07 855,234.45 856.5,233.58 858,231.72 859.5,232.13 861,232.27 862.5,232.65 864,232.41 865.5,232.07 867,231.71 868.5,231.89 870,231.98 871.5,231.84 873,231.94 874.5,232.06 876,231.78 877.5,231.86 879,232.17 880.5,232.2 882,232.89 883.5,233.34 885,233.84 886.5,234.39 888,234.23 889.5,235.04 891,234.94 892.5,234.72 894,235.08 895.5,234.86 897,235.12 898.5,234.72 900,234.65 901.5,234.75 903,234.55 904.5,234.89 906,234.64 907.5,234.69 909,234.68 910.5,234.75 912,234.49 913.5,234.42 915,234.69 916.5,234.34 918,234.48 919.5,233.84 921,233.64 922.5,233.2 924,233.11 925.5,233.24 927,232.98 928.5,232.8 930,233.2 931.5,232.93 933,233.11 934.5,233.15 936,233.18 937.5,232.74 939,233.14 940.5,233.07 942,232.98 943.5,232.87 945,233.94 946.5,234.3 948,234.56 949.5,234.55 951,234.79 952.5,234.89 954,235.22 955.5,235.11 957,235.11 958.5,234.76 960,234.68 961.5,235.15 963,235.11 964.5,235.05 966,235.02 967.5,234.83 969,234.74 970.5,234.91 972,235.04 973.5,234.76 975,234.76 976.5,234.47 978,234.07 979.5,234.06 981,234.01 982.5,233.78 984,233.57 985.5,233.78 987,233.06 988.5,232.93 990,232.68 991.5,232.75 993,233.02 994.5,233.04 996,233.24 997.5,232.94 999,233.31 1000.5,233.33 1002,233.27 1003.5,233.32 1005,233.23 1006.5,233.64 1008,233.91 1009.5,234.06 1011,234.32 1012.5,234.35 1014,234.66 1015.5,234.24 1017,234.5 1018.5,234.89 1020,234.92 1021.5,234.96 1023,234.96 1024.5,235.07 1026,234.59 1027.5,234.46 1029,234.75 1030.5,234.7 1032,234.91 1033.5,234.86 1035,234.68 1036.5,234.69 1038,234.3 1039.5,234.68 1041,234.64 1042.5,233.9 1044,234 1045.5,234.07 1047,233.66 1048.5,233.81 1050,233.33 1051.5,232.93 1053,232.88 1054.5,232.86 1056,233 1057.5,232.81 1059,232.92 1060.5,232.59 1062,232.78 1063.5,232.67 1065,232.99 1066.5,233.23 1068,233.31 1069.5,233.64 1071,234.17 1072.5,234.62 1074,235 1075.5,235.43 1077,236.14 1078.5,236.2 1080,236.24 1081.5,236.39 1083,236.33 1084.5,236.06 1086,235.82 1087.5,235.31 1089,234.89 1090.5,234.96 1092,234.41 1093.5,234.25 1095,234.15 1096.5,234.39 1098,234.35 1099.5,234.23 1101,234.15 1102.5,234.06 1104,233.72 1105.5,233.46 1107,233.42 1108.5,233.54 1110,233.31 1111.5,233.1 1113,233.41 1114.5,232.93 1116,232.66 1117.5,232.69 1119,232.67 1120.5,232.8 1122,232.94 1123.5,232.52 1125,233.05 1126.5,233.15 1128,233.43 1129.5,234.17 1131,234.52 1132.5,234.51 1134,234.98 1135.5,235.66 1137,235.68 1138.5,235.5 1140,234.87 1141.5,234.6 1143,234.68 1144.5,233.92 1146,233.5 1147.5,233.72 1149,233.93 1150.5,233.83 1152,234.12 1153.5,234.21 1155,233.64 1156.5,233.87 1158,233.97 1159.5,233.74" fill="none" stroke="#3a0da6" stroke-width="1.7" stroke-linejoin="round"/><line x1="1096.8" y1="234.68" x2="1096.8" y2="338.2" stroke="#3a0da6" stroke-width="2.4"/><rect x="780.4" y="363.8" width="366" height="11.4" fill="#f4f0f4" stroke="#8c8c8c" stroke-width="1"/><rect x="1123.4" y="364.2" width="22.8" height="10.8" fill="#b9b9b9" stroke="#1c1c1c" stroke-width="1.5"/><rect x="774.2" y="383.8" width="89.4" height="13" fill="#c3c3c3" stroke="#9a9a9a" stroke-width="1"/><text x="777.6" y="393.3" font-size="7.5" fill="#1a1a1a" text-anchor="start" style="font-family:'Liberation Sans',sans-serif">13.04.2025 06:55:56</text><line x1="849.6" y1="386.3" x2="849.6" y2="394.6" stroke="#8c8c8c" stroke-width="1"/><rect x="853.2" y="386.4" width="6.4" height="8.4" fill="none" rx="1" stroke="#444" stroke-width="1"/><path d="M854.4 389H858.4M854.4 391H858.4M854.4 393H858.4" stroke="#555" stroke-width="0.8" fill="none"/><path d="M853.2 386.4H859.6" stroke="#333" stroke-width="1.6" fill="none"/><path d="M952.6 386.9l-3.2 3.3l3.2 3.3M956.6 386.9l-3.2 3.3l3.2 3.3" stroke="#111" stroke-width="1.5" fill="none"/><path d="M967.2 386.9l-3.2 3.3l3.2 3.3" stroke="#111" stroke-width="1.5" fill="none"/><rect x="975.6" y="384.2" width="166.8" height="12.2" fill="#f8f5f8" stroke="#3a3a3a" stroke-width="1"/><text x="988" y="393" font-size="7.6" fill="#1c1c1c" text-anchor="start" style="font-family:'Liberation Sans',sans-serif">5 день 13 час 17 мин 22 сек 278 мс</text><path d="M1124.2 388.8h5.6l-2.8 3.2z" stroke="#111" stroke-width="0" fill="#111"/><path d="M1150.2 386.9l3.2 3.3l-3.2 3.3" stroke="#111" stroke-width="1.5" fill="none"/><path d="M1161.4 386.9l3.2 3.3l-3.2 3.3M1165.4 386.9l3.2 3.3l-3.2 3.3" stroke="#111" stroke-width="1.5" fill="none"/></g></svg>
<svg x="778.8" y="413.5" width="398" height="221.4" viewBox="778.8 413.5 398 221.4" overflow="hidden"><g><rect x="779.3" y="414" width="397" height="220.4" fill="#f7f0f4" stroke="#bdbdc8" stroke-width="1"/><rect x="779.8" y="414.5" width="396" height="13.2" fill="#dfdbfd"/><rect x="779.8" y="427.7" width="396" height="19.4" fill="#fbf9fb"/><text x="786" y="424" font-size="7.5" fill="#1c1c1c" text-anchor="start" style="font-family:'Liberation Sans',sans-serif">QF4</text><line x1="1152.4" y1="422.9" x2="1159.8" y2="422.9" stroke="#666" stroke-width="1"/><path d="M1166.4 418.5l5 5m0 -5l-5 5" stroke="#222" stroke-width="1" fill="none"/><g transform="translate(790.5 437.1)"><path d="M-3.8 -4.6L4 0L-3.8 4.6Z" stroke="#141414" stroke-width="1.2" fill="none" stroke-linejoin="round"/></g><g transform="translate(811.31 437.1)"><path d="M-3.6 -3.4V3.4H2.2M-3.6 -0.2H2.2" stroke="#141414" stroke-width="1.1" fill="none"/><rect x="-5.3" y="-6.2" width="3.4" height="3.2" fill="#fbf9fb" rx="0.8" stroke="#141414" stroke-width="1"/><circle cx="3.8" cy="-0.2" r="1.6" fill="#fbf9fb" stroke="#141414"/><circle cx="3.8" cy="3.6" r="1.6" fill="#fbf9fb" stroke="#141414"/></g><g transform="translate(832.12 437.1)"><rect x="-5.3" y="-4" width="10.6" height="8.2" fill="none" rx="1.2" stroke="#141414" stroke-width="1.3"/><path d="M-5.3 -1.3H5.3M-5.3 1.4H5.3M-2.2 -4V4.2" stroke="#141414" stroke-width="1.1" fill="none"/></g><g transform="translate(852.93 437.1)"><path d="M-4.2 -0.6V4.4H4.2V-0.6M0 2V-5M-2.6 -2.6L0 -5.2L2.6 -2.6" stroke="#141414" stroke-width="1.25" fill="none" stroke-linejoin="round"/></g><g transform="translate(873.74 437.1)"><path d="M-0.6 -3.6L-4 0L-0.6 3.6M3.8 -3.6L0.4 0L3.8 3.6" stroke="#141414" stroke-width="1.5" fill="none"/></g><g transform="translate(894.55 437.1)"><path d="M1.6 -3.6L-1.8 0L1.6 3.6" stroke="#141414" stroke-width="1.5" fill="none"/></g><g transform="translate(915.36 437.1)"><path d="M-1.6 -3.6L1.8 0L-1.6 3.6" stroke="#141414" stroke-width="1.5" fill="none"/></g><g transform="translate(936.17 437.1)"><path d="M0.6 -3.6L4 0L0.6 3.6M-3.8 -3.6L-0.4 0L-3.8 3.6" stroke="#141414" stroke-width="1.5" fill="none"/></g><g transform="translate(956.98 437.1)"><path d="M-5 -6V5.4H6M-2 5.4V0.4H1.4V-5.6H4.4V5.4M-2 2L4.6 -2.4" stroke="#444" stroke-width="1" fill="none"/></g><g transform="translate(977.79 437.1)"><path d="M-4 -5V5H5M-1.6 5V-1H1.4V-5.2H4V5M-5.4 -5.6L5.6 5.6M5.4 -5.4L-5.4 5.6" stroke="#333" stroke-width="1" fill="none"/></g><g transform="translate(998.6 437.1)"><path d="M0 -5.4L1.5 -1.7L5.4 -1.5L2.4 1L3.4 4.8L0 2.7L-3.4 4.8L-2.4 1L-5.4 -1.5L-1.5 -1.7Z" stroke="#141414" stroke-width="0.5" fill="#141414"/></g><g transform="translate(1019.41 437.1)"><rect x="-4.6" y="-4.8" width="10" height="8.4" fill="#e4e4e4" stroke="#8a8a8a" stroke-width="1"/><path d="M-5.6 -4.4V5H4.6" stroke="#8a8a8a" stroke-width="1" fill="none"/><path d="M-3.6 -0.6C-1 -2.6 1.4 0.6 4.6 -2.2M-3.6 1.8C-1 0 1.4 3 4.6 0.4" stroke="#777" stroke-width="0.9" fill="none"/></g><g transform="translate(1040.22 437.1)"><text x="0" y="2" font-size="5.6" fill="#222" text-anchor="middle" font-weight="bold" style="font-family:'Liberation Sans',sans-serif">LOG</text></g><g transform="translate(1061.03 437.1)"><rect x="-5.2" y="-5.8" width="6.6" height="11.8" fill="#dcdcdc" stroke="#555" stroke-width="1"/><path d="M-5.2 0H1.4M4.4 -6V6.2M3.4 -6H5.4M3.4 6.2H5.4" stroke="#555" stroke-width="1" fill="none"/></g><rect x="1072.64" y="428.1" width="18.4" height="18" fill="#b9c9e9"/><g transform="translate(1081.84 437.1)"><rect x="-5.8" y="-2.6" width="11.6" height="7.8" fill="#e6e6e6" stroke="#444" stroke-width="1.1"/><path d="M0 -2.6V5.2M-5.8 -5.6H5.8M-5.8 -6.4V-4.6M5.8 -6.4V-4.6" stroke="#444" stroke-width="1" fill="none"/></g><g transform="translate(1102.65 437.1)"><path d="M-2.4 -3.2H5.4M-2.4 0H5.4M-2.4 3.2H5.4" stroke="#141414" stroke-width="1.7" fill="none"/><path d="M-5.4 -3.2H-4M-5.4 0H-4M-5.4 3.2H-4" stroke="#141414" stroke-width="1.7" fill="none"/></g><g transform="translate(1123.46 437.1)"><rect x="-4.8" y="-1.6" width="9.6" height="5" fill="none" rx="1.4" stroke="#141414" stroke-width="1.3"/><rect x="-2.6" y="-4.6" width="5.2" height="3" fill="none" stroke="#141414" stroke-width="1.2"/><rect x="-2.6" y="1.6" width="5.2" height="3.2" fill="#fbf9fb" stroke="#141414" stroke-width="1.2"/></g><g transform="translate(1144.27 437.1)"><rect x="-6.6" y="-3.8" width="13.2" height="9.4" fill="none" rx="1.6" stroke="#141414" stroke-width="1.3"/><path d="M1.8 -3.8L2.8 -6.2H5.4L6 -3.8" stroke="#141414" stroke-width="1.1" fill="none"/><circle cx="0" cy="1" r="3.1" fill="none" stroke="#141414" stroke-width="1.1"/><circle cx="0" cy="1" r="1.3" fill="none" stroke="#141414" stroke-width="1"/></g><g transform="translate(1165.08 437.1)"><path d="M-5.6 1.2A5.6 5.6 0 0 1 3.6 -4.4M5.6 -1.2A5.6 5.6 0 0 1 -3.6 4.4M1.4 -5.8L4 -4.4L2.8 -1.8M-1.4 5.8L-4 4.4L-2.8 1.8" stroke="#141414" stroke-width="1.1" fill="none"/><circle cx="0" cy="0" r="2" fill="none" stroke="#141414" stroke-width="1.1"/><path d="M-4.6 4.6L4.6 -4.6" stroke="#141414" stroke-width="0.9" fill="none"/></g><rect x="818.6" y="464.8" width="347.6" height="91.7" fill="#fff" stroke="#d6d6d6" stroke-width="1"/><line x1="818.6" y1="483.14" x2="1166.2" y2="483.14" stroke="#cfcfcf" stroke-width="1"/><line x1="818.6" y1="501.48" x2="1166.2" y2="501.48" stroke="#cfcfcf" stroke-width="1"/><line x1="818.6" y1="519.82" x2="1166.2" y2="519.82" stroke="#cfcfcf" stroke-width="1"/><line x1="818.6" y1="538.16" x2="1166.2" y2="538.16" stroke="#cfcfcf" stroke-width="1"/><line x1="873.4" y1="464.8" x2="873.4" y2="556.5" stroke="#c9c9c9" stroke-width="1"/><line x1="931" y1="464.8" x2="931" y2="556.5" stroke="#c9c9c9" stroke-width="1"/><line x1="989" y1="464.8" x2="989" y2="556.5" stroke="#c9c9c9" stroke-width="1"/><line x1="1047" y1="464.8" x2="1047" y2="556.5" stroke="#c9c9c9" stroke-width="1"/><line x1="1105.6" y1="464.8" x2="1105.6" y2="556.5" stroke="#c9c9c9" stroke-width="1"/><line x1="818.6" y1="464.8" x2="818.6" y2="556.5" stroke="#e25a5a" stroke-width="1.2"/><line x1="814" y1="464.8" x2="818.6" y2="464.8" stroke="#555" stroke-width="1"/><text x="814.2" y="467.5" font-size="8" fill="#d63a3a" text-anchor="end" style="font-family:'Liberation Serif',serif">150</text><line x1="814" y1="483.14" x2="818.6" y2="483.14" stroke="#555" stroke-width="1"/><text x="814.2" y="485.84" font-size="8" fill="#d63a3a" text-anchor="end" style="font-family:'Liberation Serif',serif">120</text><line x1="814" y1="501.48" x2="818.6" y2="501.48" stroke="#555" stroke-width="1"/><text x="814.2" y="504.18" font-size="8" fill="#d63a3a" text-anchor="end" style="font-family:'Liberation Serif',serif">90</text><line x1="814" y1="519.82" x2="818.6" y2="519.82" stroke="#555" stroke-width="1"/><text x="814.2" y="522.52" font-size="8" fill="#d63a3a" text-anchor="end" style="font-family:'Liberation Serif',serif">60</text><line x1="814" y1="538.16" x2="818.6" y2="538.16" stroke="#555" stroke-width="1"/><text x="814.2" y="540.86" font-size="8" fill="#d63a3a" text-anchor="end" style="font-family:'Liberation Serif',serif">30</text><line x1="814" y1="556.5" x2="818.6" y2="556.5" stroke="#555" stroke-width="1"/><text x="814.2" y="559.2" font-size="8" fill="#d63a3a" text-anchor="end" style="font-family:'Liberation Serif',serif">0</text><text transform="translate(801.6 510.65) rotate(-90)" font-size="7.5" fill="#d63a3a" text-anchor="middle" style="font-family:'Liberation Serif',serif">Ток</text><line x1="817.6" y1="556.5" x2="1166.2" y2="556.5" stroke="#444" stroke-width="1.2"/><line x1="818.6" y1="556.5" x2="818.6" y2="559.9" stroke="#444" stroke-width="1"/><text x="818.6" y="567.7" font-size="7.5" fill="#1c1c1c" text-anchor="middle" style="font-family:'Liberation Sans',sans-serif">17.04.2025</text><text x="818.6" y="575.2" font-size="7.5" fill="#1c1c1c" text-anchor="middle" style="font-family:'Liberation Sans',sans-serif">20:13:00</text><line x1="931" y1="556.5" x2="931" y2="559.9" stroke="#444" stroke-width="1"/><text x="931" y="567.7" font-size="7.5" fill="#1c1c1c" text-anchor="middle" style="font-family:'Liberation Sans',sans-serif">18.04.2025</text><text x="931" y="575.2" font-size="7.5" fill="#1c1c1c" text-anchor="middle" style="font-family:'Liberation Sans',sans-serif">04:00:00</text><line x1="989" y1="556.5" x2="989" y2="559.9" stroke="#444" stroke-width="1"/><text x="989" y="567.7" font-size="7.5" fill="#1c1c1c" text-anchor="middle" style="font-family:'Liberation Sans',sans-serif">18.04.2025</text><text x="989" y="575.2" font-size="7.5" fill="#1c1c1c" text-anchor="middle" style="font-family:'Liberation Sans',sans-serif">08:00:00</text><line x1="1047" y1="556.5" x2="1047" y2="559.9" stroke="#444" stroke-width="1"/><text x="1047" y="567.7" font-size="7.5" fill="#1c1c1c" text-anchor="middle" style="font-family:'Liberation Sans',sans-serif">18.04.2025</text><text x="1047" y="575.2" font-size="7.5" fill="#1c1c1c" text-anchor="middle" style="font-family:'Liberation Sans',sans-serif">12:00:00</text><line x1="1105.6" y1="556.5" x2="1105.6" y2="559.9" stroke="#444" stroke-width="1"/><text x="1105.6" y="567.7" font-size="7.5" fill="#1c1c1c" text-anchor="middle" style="font-family:'Liberation Sans',sans-serif">18.04.2025</text><text x="1105.6" y="575.2" font-size="7.5" fill="#1c1c1c" text-anchor="middle" style="font-family:'Liberation Sans',sans-serif">16:00:00</text><line x1="1166.2" y1="556.5" x2="1166.2" y2="559.9" stroke="#444" stroke-width="1"/><text x="1166.2" y="567.7" font-size="7.5" fill="#1c1c1c" text-anchor="middle" style="font-family:'Liberation Sans',sans-serif">18.04.2025</text><text x="1166.2" y="575.2" font-size="7.5" fill="#1c1c1c" text-anchor="middle" style="font-family:'Liberation Sans',sans-serif">20:13:00</text><polyline points="819.4,485.56 822,481.89 828,481.89 829,486.79 834,486.79 835,483.12 840,483.12 841,477 847,477 848,486.17 858,486.17 859,481.89 861,481.89 862,476.39 868,476.39 869,482.51 880,482.51 881,478.84 882,482.51 887,482.51 888,486.79 893,486.79 894,481.89 899,481.89 900,477 906,477 907,481.89 910,481.89 911,486.79 916,486.79 917,483.12 924,483.12 925,478.23 926,483.12 928,483.12 929,477.62 935,477.62 936,483.12 939,483.12 940,486.79 950,486.79 951,483.12 956,483.12 957,477.62 963,477.62 964,483.12 970,483.12 971,486.79 976,486.79 977,481.89 979,481.89 980,475.78 989,475.78 990,481.89 998,481.89 999,486.17 1003,486.17 1004,480.67 1009,480.67 1010,485.56 1014,485.56 1015,481.89 1019,481.89 1020,475.17 1027,475.17 1028,481.89 1030,481.89 1031,485.56 1040,485.56 1041,481.89 1043,481.89 1044,477 1050,477 1051,483.12 1056,483.12 1057,486.79 1062,486.79 1063,480.67 1069,480.67 1070,485.56 1074,485.56 1075,483.73 1086,483.73 1087,480.67 1092,480.67 1093,486.79 1100,486.79 1101,484.34 1107,484.34 1108,477 1114,477 1115,485.56 1117,486.79 1128,486.79 1129,483.12 1131,483.12 1132,476.39 1138,476.39 1139,481.89 1143,481.89 1144,483.73 1166,483.73" fill="none" stroke="#e0245a" stroke-width="1.9" stroke-linejoin="round"/><polyline points="818.6,556.5 819.4,484.36 822,480.69 828,480.69 829,485.59 834,485.59 835,481.92 840,481.92 841,475.8 847,475.8 848,484.97 858,484.97 859,480.69 861,480.69 862,475.19 868,475.19 869,481.31 880,481.31 881,477.64 882,481.31 887,481.31 888,485.59 893,485.59 894,480.69 899,480.69 900,475.8 906,475.8 907,480.69 910,480.69 911,485.59 916,485.59 917,481.92 924,481.92 925,477.03 926,481.92 928,481.92 929,476.42 935,476.42 936,481.92 939,481.92 940,485.59 950,485.59 951,481.92 956,481.92 957,476.42 963,476.42 964,481.92 970,481.92 971,485.59 976,485.59 977,480.69 979,480.69 980,474.58 989,474.58 990,480.69 998,480.69 999,484.97 1003,484.97 1004,479.47 1009,479.47 1010,484.36 1014,484.36 1015,480.69 1019,480.69 1020,473.97 1027,473.97 1028,480.69 1030,480.69 1031,484.36 1040,484.36 1041,480.69 1043,480.69 1044,475.8 1050,475.8 1051,481.92 1056,481.92 1057,485.59 1062,485.59 1063,479.47 1069,479.47 1070,484.36 1074,484.36 1075,482.53 1086,482.53 1087,479.47 1092,479.47 1093,485.59 1100,485.59 1101,483.14 1107,483.14 1108,475.8 1114,475.8 1115,484.36 1117,485.59 1128,485.59 1129,481.92 1131,481.92 1132,475.19 1138,475.19 1139,480.69 1143,480.69 1144,482.53 1166,482.53" fill="none" stroke="#2a12b4" stroke-width="2" stroke-linejoin="round"/><line x1="819.2" y1="484.36" x2="819.2" y2="556.5" stroke="#9a1090" stroke-width="1.6"/><rect x="786.2" y="582.6" width="366.8" height="11.4" fill="#f4f0f4" stroke="#8c8c8c" stroke-width="1"/><rect x="1141" y="583" width="11.6" height="10.8" fill="#b9b9b9" stroke="#1c1c1c" stroke-width="1.5"/><rect x="780.6" y="602.2" width="89.4" height="13" fill="#c3c3c3" stroke="#9a9a9a" stroke-width="1"/><text x="784" y="611.7" font-size="7.5" fill="#1a1a1a" text-anchor="start" style="font-family:'Liberation Sans',sans-serif">17.04.2025 20:13:00</text><line x1="856" y1="604.7" x2="856" y2="613" stroke="#8c8c8c" stroke-width="1"/><rect x="859.6" y="604.8" width="6.4" height="8.4" fill="none" rx="1" stroke="#444" stroke-width="1"/><path d="M860.8 607.4H864.8M860.8 609.4H864.8M860.8 611.4H864.8" stroke="#555" stroke-width="0.8" fill="none"/><path d="M859.6 604.8H866" stroke="#333" stroke-width="1.6" fill="none"/><path d="M921.4 605.5l-3.2 3.3l3.2 3.3M925.4 605.5l-3.2 3.3l3.2 3.3" stroke="#111" stroke-width="1.5" fill="none"/><path d="M936.2 605.5l-3.2 3.3l3.2 3.3" stroke="#111" stroke-width="1.5" fill="none"/><rect x="944.4" y="602.6" width="66.6" height="12.4" fill="#f8f5f8" stroke="#3a3a3a" stroke-width="1"/><text x="969.4" y="611.6" font-size="7.6" fill="#1c1c1c" text-anchor="middle" style="font-family:'Liberation Sans',sans-serif">1 день</text><path d="M993 607.2h5.6l-2.8 3.2z" stroke="#111" stroke-width="0" fill="#111"/><path d="M1018.4 605.5l3.2 3.3l-3.2 3.3" stroke="#111" stroke-width="1.5" fill="none"/><path d="M1029.8 605.5l3.2 3.3l-3.2 3.3M1033.8 605.5l3.2 3.3l-3.2 3.3" stroke="#111" stroke-width="1.5" fill="none"/><rect x="1085.4" y="602.2" width="90" height="13" fill="#c3c3c3" stroke="#9a9a9a" stroke-width="1"/><text x="1088.8" y="611.7" font-size="7.5" fill="#1a1a1a" text-anchor="start" style="font-family:'Liberation Sans',sans-serif">18.04.2025 20:13:00</text><line x1="1161.4" y1="604.7" x2="1161.4" y2="613" stroke="#8c8c8c" stroke-width="1"/><rect x="1165" y="604.8" width="6.4" height="8.4" fill="none" rx="1" stroke="#444" stroke-width="1"/><path d="M1166.2 607.4H1170.2M1166.2 609.4H1170.2M1166.2 611.4H1170.2" stroke="#555" stroke-width="0.8" fill="none"/><path d="M1165 604.8H1171.4" stroke="#333" stroke-width="1.6" fill="none"/></g></svg>
</svg>
</body></html>
